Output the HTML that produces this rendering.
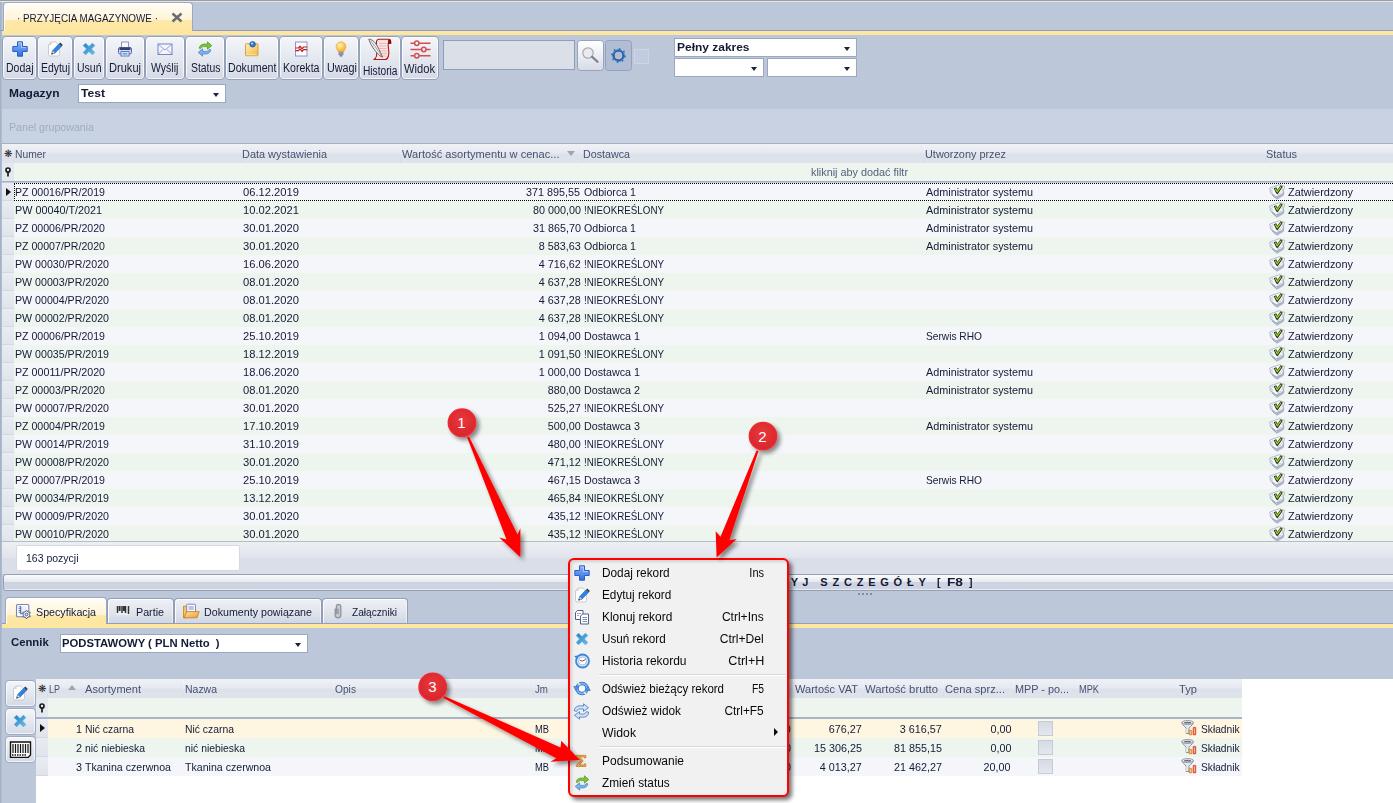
<!DOCTYPE html>
<html lang="pl"><head><meta charset="utf-8"><title>Przyjęcia magazynowe</title>
<style>
html,body{margin:0;padding:0}
body{width:1393px;height:803px;overflow:hidden;position:relative;background:#bcc7d9;font:11px 'Liberation Sans', sans-serif;color:#131a36}
.a{position:absolute;white-space:nowrap}
.t{position:absolute;white-space:nowrap;line-height:14px;height:14px}
.tr{position:absolute;white-space:nowrap;line-height:14px;height:14px;text-align:right}
.sx{display:inline-block;transform-origin:0 50%}
.btn{position:absolute;box-sizing:border-box;border:1px solid #95a2ba;border-radius:4px;background:linear-gradient(#f4f6f9 0%,#e6e9f0 45%,#d4dae5 100%);box-shadow:inset 0 0 0 1px rgba(255,255,255,.7)}
.btn .l{position:absolute;left:0;right:0;text-align:center;font-size:12.5px;line-height:14px;white-space:nowrap}
.cb{position:absolute;box-sizing:border-box;background:#fff;border:1px solid #9aa7bf}
.cb i{position:absolute;right:6px;top:50%;margin-top:-1px;width:0;height:0;border-left:3.5px solid transparent;border-right:3.5px solid transparent;border-top:4px solid #1b2440}
.cb b{position:absolute;left:3px;top:50%;margin-top:-8px;line-height:14px;font-size:11px;white-space:nowrap}
.hd{position:absolute;box-sizing:border-box;background:linear-gradient(#eff1f6 0%,#e6e9f0 48%,#dde1ea 52%,#dfe3eb 100%);color:#465170;line-height:18px;white-space:nowrap;overflow:hidden}
.row{position:absolute;left:0;height:18px}
.mi{position:absolute;left:0;right:0;height:22px;font-size:12px;line-height:22px;color:#1a1a1a;white-space:nowrap}
</style></head><body>

<div class="a" style="left:0;top:0;width:1393px;height:1px;background:#9c9c9c"></div>
<div class="a" style="left:0;top:1px;width:1393px;height:1px;background:#e4e6ea"></div>
<div class="a" style="left:0;top:2px;width:2px;height:801px;background:linear-gradient(90deg,#a3afc6,#b2bdd1)"></div>
<div class="a" style="left:0;top:30px;width:1393px;height:1px;background:#8f9fbd"></div>
<div class="a" style="left:2px;top:31px;width:1391px;height:4px;background:#fde6a0"></div>
<div class="a" style="left:3px;top:2px;width:190px;height:29px;box-sizing:border-box;border:1px solid #9ba8c1;border-bottom:none;border-radius:4px 4px 0 0;background:linear-gradient(#fffdf6 0%,#fff4d8 59%,#fde8a8 63%,#fde6a0 100%);box-shadow:inset 1px 1px 0 rgba(255,255,255,.8)"></div>
<div class="t" style="left:16.8px;top:11px;"><span class="sx" style="transform:scaleX(0.8976);transform-origin:0 50%">· PRZYJĘCIA MAGAZYNOWE ·</span></div>
<svg class="a" style="left:171px;top:12px" width="12" height="11" viewBox="0 0 12 11"><path d="M1.500 1.500l9 8M10.500 1.500l-9 8" stroke="#666a72" stroke-width="2.400"/></svg>
<div class="btn" style="left:2px;top:36px;width:35px;height:44px"></div>
<div class="t" style="left:6.0px;top:61px;font-size:12.5px;"><span class="sx" style="transform:scaleX(0.8417);transform-origin:0 50%">Dodaj</span></div>
<svg style="position:absolute;left:12px;top:41px" width="16" height="16" viewBox="0 0 16 16"><defs><linearGradient id="gp1241" x1="0" y1="0" x2="0" y2="1"><stop offset="0" stop-color="#8db4f5"/><stop offset="1" stop-color="#2f6fe0"/></linearGradient></defs><path d="M5.5 0.8h5v4.7h4.7v5h-4.7v4.7h-5v-4.7h-4.7v-5h4.7z" fill="url(#gp1241)" stroke="#2a5fc8" stroke-width="1" stroke-linejoin="round"/><path d="M6.5 2h3v4.6h4.5" fill="none" stroke="#b9d2fb" stroke-width="1" opacity=".8"/></svg>
<div class="btn" style="left:37px;top:36px;width:36px;height:44px"></div>
<div class="t" style="left:40.8px;top:61px;font-size:12.5px;"><span class="sx" style="transform:scaleX(0.8345);transform-origin:0 50%">Edytuj</span></div>
<svg style="position:absolute;left:47px;top:41px" width="16" height="16" viewBox="0 0 16 16"><path d="M4.200 1h4.500l3.800 3.800v8.700a1.500 1.500 0 0 1-1.500 1.500h-8a1.500 1.500 0 0 1-1.500-1.500v-9.500z" fill="#fefefe" stroke="#c2c6cf" stroke-width=".900" stroke-linejoin="round"/><path d="M4.200 1v2.500h-2.500z" fill="#e3e5ea" stroke="#c2c6cf" stroke-width=".600"/><path d="M4.600 13.200l1.100-3.600 6.400-6.800 2.500 2.400-6.400 6.800z" fill="#2b84ea" stroke="#1c62c0" stroke-width=".600"/><path d="M12.100 2.800l1.200-1.300 2.500 2.400-1.200 1.300z" fill="#3a3a3a"/><path d="M4.600 13.200l1.100-3.600 2.500 2.400z" fill="#dcdcdc" stroke="#7a7a7a" stroke-width=".500"/><path d="M4.600 13.200l.500-1.500 1 1z" fill="#2a2a2a"/></svg>
<div class="btn" style="left:73px;top:36px;width:32px;height:44px"></div>
<div class="t" style="left:76.9px;top:61px;font-size:12.5px;"><span class="sx" style="transform:scaleX(0.8394);transform-origin:0 50%">Usuń</span></div>
<svg style="position:absolute;left:81px;top:41px" width="16" height="16" viewBox="0 0 16 16"><defs><linearGradient id="gd8141" x1="0" y1="0" x2="1" y2="1"><stop offset="0" stop-color="#1f7fc4"/><stop offset="1" stop-color="#6fc0ee"/></linearGradient></defs><path d="M2.2 4.6l2.4-2.4 3.4 3.4 3.4-3.4 2.4 2.4-3.4 3.4 3.4 3.4-2.4 2.4-3.4-3.4-3.4 3.4-2.4-2.4 3.4-3.4z" fill="url(#gd8141)" stroke="#4aa3dc" stroke-width=".6" stroke-linejoin="round"/></svg>
<div class="btn" style="left:105px;top:36px;width:40px;height:44px"></div>
<div class="t" style="left:109.2px;top:61px;font-size:12.5px;"><span class="sx" style="transform:scaleX(0.8858);transform-origin:0 50%">Drukuj</span></div>
<svg style="position:absolute;left:117px;top:41px" width="16" height="16" viewBox="0 0 16 16"><rect x="4.500" y="1" width="7" height="6" fill="#f8f9fd" stroke="#8a96c8" stroke-width="1"/><rect x="1.500" y="6.500" width="13" height="6.500" rx="1.500" fill="#d3daf2" stroke="#5a69ad" stroke-width="1"/><rect x="2.500" y="6.500" width="11" height="2.500" fill="#33406e"/><rect x="4" y="10.500" width="8" height="4.500" fill="#eef4fd" stroke="#6878b8" stroke-width="1"/><rect x="5.500" y="11.800" width="5" height="1.800" fill="#58a6ea"/></svg>
<div class="btn" style="left:145px;top:36px;width:40px;height:44px"></div>
<div class="t" style="left:151.2px;top:61px;font-size:12.5px;"><span class="sx" style="transform:scaleX(0.8392);transform-origin:0 50%">Wyślij</span></div>
<svg style="position:absolute;left:157px;top:41px" width="16" height="16" viewBox="0 0 16 16"><rect x="1" y="3" width="14" height="10.5" fill="#f4f6fd" stroke="#7484c4" stroke-width="1"/><path d="M1.3 3.4l6.7 5.6 6.7-5.6M1.3 13.2l5-5M14.7 13.2l-5-5" fill="none" stroke="#8a98d0" stroke-width=".9"/></svg>
<div class="btn" style="left:185px;top:36px;width:40px;height:44px"></div>
<div class="t" style="left:190.7px;top:61px;font-size:12.5px;"><span class="sx" style="transform:scaleX(0.8325);transform-origin:0 50%">Status</span></div>
<svg style="position:absolute;left:197px;top:41px" width="16" height="16" viewBox="0 0 16 16"><path d="M2.2 7.2c.4-3 3-4.4 6-4.2l2.2.2v-2.4l4.4 3.8-4.4 3.6v-2.4l-2.4-.2c-2-.1-3.6.4-4.4 2z" fill="#7cc33a" stroke="#4d9a1c" stroke-width=".7" stroke-linejoin="round"/><path d="M13.8 8.8c-.4 3-3 4.4-6 4.2l-2.2-.2v2.4l-4.4-3.8 4.4-3.6v2.4l2.4.2c2 .1 3.600-.4 4.400-2z" fill="#7db3ea" stroke="#3d7dc8" stroke-width=".7" stroke-linejoin="round"/></svg>
<div class="btn" style="left:225px;top:36px;width:54px;height:44px"></div>
<div class="t" style="left:227.7px;top:61px;font-size:12.5px;"><span class="sx" style="transform:scaleX(0.8511);transform-origin:0 50%">Dokument</span></div>
<svg style="position:absolute;left:244px;top:41px" width="16" height="16" viewBox="0 0 16 16"><defs><linearGradient id="gdc24441" x1="0" y1="0" x2="1" y2="1"><stop offset="0" stop-color="#fdf0c0"/><stop offset="1" stop-color="#f4b63c"/></linearGradient></defs><rect x="1.500" y="2.700" width="12.500" height="12" rx=".800" fill="url(#gdc24441)" stroke="#d9a041" stroke-width="1"/><path d="M2.500 13.700h10.500" stroke="#fbe3a0" stroke-width="1"/><circle cx="8.600" cy="3.300" r="2.800" fill="#2f76cc" stroke="#1f58a6" stroke-width=".700"/><circle cx="8" cy="2.500" r="1.100" fill="#bcd9f8"/></svg>
<div class="btn" style="left:279px;top:36px;width:44px;height:44px"></div>
<div class="t" style="left:282.7px;top:61px;font-size:12.5px;"><span class="sx" style="transform:scaleX(0.8470);transform-origin:0 50%">Korekta</span></div>
<svg style="position:absolute;left:293px;top:41px" width="16" height="16" viewBox="0 0 16 16"><rect x="2.500" y="1" width="11.500" height="14" fill="#fdfdff" stroke="#8a96cc" stroke-width="1"/><path d="M2.200 7h3.300l1.500-1.800 2 2.600 1.500-1.800h3.800M2.200 9.700h3.300l1.500-1.800 2 2.600 1.500-1.800h3.800" fill="none" stroke="#c61c1c" stroke-width="1.200" stroke-linejoin="round"/></svg>
<div class="btn" style="left:323px;top:36px;width:36px;height:44px"></div>
<div class="t" style="left:326.9px;top:61px;font-size:12.5px;"><span class="sx" style="transform:scaleX(0.8633);transform-origin:0 50%">Uwagi</span></div>
<svg style="position:absolute;left:333px;top:41px" width="16" height="16" viewBox="0 0 16 16"><defs><radialGradient id="gb33341" cx=".4" cy=".35" r=".7"><stop offset="0" stop-color="#fff3b0"/><stop offset="1" stop-color="#f5a623"/></radialGradient></defs><path d="M8 .8a5 5 0 0 1 5 5c0 2.200-1.800 3.200-2.200 5.200h-5.600c-.4-2-2.200-3-2.200-5.200a5 5 0 0 1 5-5z" fill="url(#gb33341)" stroke="#e8a030" stroke-width=".5"/><rect x="5.800" y="11.200" width="4.400" height="3" rx=".8" fill="#8e98b8" stroke="#6a7498" stroke-width=".5"/><path d="M6.800 15h2.400" stroke="#555f80" stroke-width="1"/></svg>
<div class="btn" style="left:359px;top:36px;width:42px;height:44px"></div>
<div class="t" style="left:362.7px;top:64px;font-size:12.5px;"><span class="sx" style="transform:scaleX(0.8142);transform-origin:0 50%">Historia</span></div>
<svg style="position:absolute;left:368px;top:37.5px" width="24" height="23" viewBox="0 0 24 23"><path d="M8.500 4c0-1.600.900-2.800 2.500-2.800h9c1.800 0 2.800 1.200 2.800 2.800v1.500h-2.600c-.400 4 1.600 8 .200 12.500-.500 2-1.500 3.500-3.300 3.500h-11.600c1.800-.500 2.600-1.600 3-3.500 1-4.500-.500-9 0-14z" fill="#fde4e4" stroke="#b01818" stroke-width="1.100"/><path d="M20 5.500v-2.500c0-1 .600-1.800 1.500-1.800s1.400.800 1.400 1.800v2.500z" fill="#8e0c0c"/><path d="M11 5.500h7.500M11 8h7.500M11.300 10.500h7.500M11.600 13h7.500M11.600 15.500h7.500M11.300 18h7" stroke="#eda6a6" stroke-width=".800"/><path d="M.800 1.200c4.500-.200 8.500 5.500 11.500 13l2.300 5-2.800-1.500c-2.500-2-9-9.500-11-16.500z" fill="#ececec" stroke="#5e5e5e" stroke-width=".900" stroke-linejoin="round"/><path d="M2 2.500c3 3 7.500 9 11.500 15.500" stroke="#8a8a8a" stroke-width=".700" fill="none"/></svg>
<div class="btn" style="left:401px;top:36px;width:38px;height:44px"></div>
<div class="t" style="left:404.2px;top:62px;font-size:12.5px;"><span class="sx" style="transform:scaleX(0.8925);transform-origin:0 50%">Widok</span></div>
<svg style="position:absolute;left:410px;top:40.4px" width="21" height="19" viewBox="0 0 21 19"><g fill="none" stroke="#cf4f52" stroke-width="1.500"><path d="M.5 3.200h4M9.200 3.200h11.300M.5 9.500h11M16.200 9.500h4.300M.5 15.800h4M9.200 15.800h11.300"/><circle cx="6.800" cy="3.200" r="2.200"/><circle cx="13.800" cy="9.500" r="2.200"/><circle cx="6.800" cy="15.800" r="2.200"/></g></svg>
<div class="a" style="left:443px;top:40px;width:132px;height:30px;box-sizing:border-box;border:1px solid #8f9db8;background:#dbdfe8"></div>
<div class="a" style="left:576.500px;top:39.500px;width:27.500px;height:31.500px;box-sizing:border-box;border:1px solid #97a4bc;border-radius:3.500px;background:linear-gradient(#ffffff 0%,#eef0f5 45%,#d6dbe6 100%)"></div>
<svg class="a" style="left:581px;top:46px" width="19" height="18" viewBox="0 0 19 18"><circle cx="7" cy="7" r="5.200" fill="#e9ebee" stroke="#a9acb2" stroke-width="1.300"/><path d="M11 10.800l5.500 5" stroke="#7b7e86" stroke-width="2.200" stroke-linecap="round"/></svg>
<div class="a" style="left:604.500px;top:39.500px;width:27.500px;height:31.500px;box-sizing:border-box;border:1px solid #94a2bc;border-radius:3.500px;background:#b1bdd4"></div>
<svg class="a" style="left:610px;top:47px" width="17" height="17" viewBox="0 0 17 17"><circle cx="8.500" cy="8.500" r="6.700" fill="none" stroke="#1a8fc8" stroke-width="1.700" stroke-dasharray="1.800 3.462"/><circle cx="8.500" cy="8.500" r="4.700" fill="none" stroke="#1748a0" stroke-width="1.500"/><circle cx="8.500" cy="8.500" r="6" fill="none" stroke="#1748a0" stroke-width=".500"/></svg>
<div class="a" style="left:634px;top:49px;width:15px;height:15px;box-sizing:border-box;border:1px solid #cdd5e3;background:#c2cce0"></div>
<div class="cb" style="left:674px;top:38px;width:183px;height:19px"><i></i></div>
<div class="t" style="left:676.6px;top:40px;font-weight:bold;"><span class="sx" style="transform:scaleX(1.0877);transform-origin:0 50%">Pełny zakres</span></div>
<div class="cb" style="left:674px;top:58px;width:90px;height:19px"><i></i></div>
<div class="cb" style="left:767px;top:58px;width:90px;height:19px"><i></i></div>
<div class="t" style="left:9.3px;top:86px;font-weight:bold;"><span class="sx" style="transform:scaleX(1.0868);transform-origin:0 50%">Magazyn</span></div>
<div class="cb" style="left:78px;top:84px;width:148px;height:19px"><i></i></div>
<div class="t" style="left:81.0px;top:86px;font-weight:bold;"><span class="sx" style="transform:scaleX(1.1003);transform-origin:0 50%">Test</span></div>
<div class="a" style="left:2px;top:109px;width:1391px;height:35px;background:#c8d2e3"></div>
<div class="a" style="left:2px;top:143px;width:1391px;height:1px;background:#a6b0c6"></div>
<div class="t" style="left:8.8px;top:120px;color:#9fabc2;"><span class="sx" style="transform:scaleX(0.9651);transform-origin:0 50%">Panel grupowania</span></div>
<div class="hd" style="left:2px;top:144px;width:1391px;height:19px"></div>
<div class="t" style="left:4px;top:147px;font-size:10px;color:#222">❋</div>
<div class="t" style="left:14.8px;top:147px;color:#465170;"><span class="sx" style="transform:scaleX(0.9389);transform-origin:0 50%">Numer</span></div>
<div class="a" style="left:13.0px;top:145px;width:1px;height:17px;background:linear-gradient(#f6f7fa,#d3d8e3)"></div>
<div class="t" style="left:242.3px;top:147px;color:#465170;"><span class="sx" style="transform:scaleX(0.9931);transform-origin:0 50%">Data wystawienia</span></div>
<div class="a" style="left:240.5px;top:145px;width:1px;height:17px;background:linear-gradient(#f6f7fa,#d3d8e3)"></div>
<div class="t" style="left:401.8px;top:147px;color:#465170;"><span class="sx" style="transform:scaleX(1.0090);transform-origin:0 50%">Wartość asortymentu w cenac...</span></div>
<div class="a" style="left:400.0px;top:145px;width:1px;height:17px;background:linear-gradient(#f6f7fa,#d3d8e3)"></div>
<div class="t" style="left:583.3px;top:147px;color:#465170;"><span class="sx" style="transform:scaleX(0.9731);transform-origin:0 50%">Dostawca</span></div>
<div class="a" style="left:581.5px;top:145px;width:1px;height:17px;background:linear-gradient(#f6f7fa,#d3d8e3)"></div>
<div class="t" style="left:925.3px;top:147px;color:#465170;"><span class="sx" style="transform:scaleX(0.9887);transform-origin:0 50%">Utworzony przez</span></div>
<div class="a" style="left:923.5px;top:145px;width:1px;height:17px;background:linear-gradient(#f6f7fa,#d3d8e3)"></div>
<div class="t" style="left:1266.3px;top:147px;color:#465170;"><span class="sx" style="transform:scaleX(0.9940);transform-origin:0 50%">Status</span></div>
<div class="a" style="left:1264.5px;top:145px;width:1px;height:17px;background:linear-gradient(#f6f7fa,#d3d8e3)"></div>
<div class="a" style="left:567px;top:151px;width:0;height:0;border-left:4.500px solid transparent;border-right:4.500px solid transparent;border-top:5px solid #9ea6b6"></div>
<div class="a" style="left:2px;top:163px;width:1391px;height:19px;background:#edf5ee"></div>
<div class="a" style="left:2px;top:163px;width:11.500px;height:19px;background:#e4e8ef"></div>
<svg class="a" style="left:4px;top:167px" width="8" height="11" viewBox="0 0 8 11"><circle cx="4" cy="3" r="2" fill="#fff" stroke="#1a1a1a" stroke-width="1.700"/><path d="M4 5v4.500" stroke="#1a1a1a" stroke-width="1.700"/></svg>
<div class="t" style="left:811.3px;top:165px;color:#55607c;"><span class="sx" style="transform:scaleX(0.9854);transform-origin:0 50%">kliknij aby dodać filtr</span></div>
<div class="a" style="left:2px;top:181px;width:1391px;height:1px;background:#a6b0c6"></div><div class="a" style="left:2px;top:182px;width:1391px;height:1px;background:#c3cad9"></div>
<div class="a" style="left:13.500px;top:183px;width:1379.500px;height:18px;background:#f5f6fa"></div>
<div class="a" style="left:2px;top:183px;width:11.500px;height:18px;background:linear-gradient(#e9ecf2,#dfe3eb);box-shadow:inset 0 -1px 0 #d3d8e2"></div>
<div class="t" style="left:14.8px;top:185px;"><span class="sx" style="transform:scaleX(0.9618);transform-origin:0 50%">PZ 00016/PR/2019</span></div>
<div class="t" style="left:242.8px;top:185px;"><span class="sx" style="transform:scaleX(1.0170);transform-origin:0 50%">06.12.2019</span></div>
<div class="t" style="right:812.5px;top:185px;"><span class="sx" style="transform:scaleX(0.9807);transform-origin:100% 50%">371 895,55</span></div>
<div class="t" style="left:584.3px;top:185px;"><span class="sx" style="transform:scaleX(0.9663);transform-origin:0 50%">Odbiorca 1</span></div>
<div class="t" style="left:926.3px;top:185px;"><span class="sx" style="transform:scaleX(0.9833);transform-origin:0 50%">Administrator systemu</span></div>
<svg class="a" style="left:1268.5px;top:184.2px" width="17" height="16" viewBox="0 0 17 16"><path d="M3.500 11.500l4.500 3.800 6.500-4-.300-1.300-6.500 3.300-4-3z" fill="#c3c9d6" stroke="#8a93a8" stroke-width=".600"/><path d="M2 9.500l5.500 4.500 7.500-4.300-.600-1.700-7 3.500-5-4z" fill="#d5dae4" stroke="#8f98ad" stroke-width=".600"/><path d="M1 7.800l6 4.700 8-4.200-1-2z" fill="#e6e9f0" stroke="#98a1b6" stroke-width=".600"/><path d="M.800 4l9.700-3.300 5.200 1.600-2.200 8-6.500 2.500-5.600-4.500z" fill="#f7f8fb" stroke="#9aa2b6" stroke-width=".700"/><path d="M2.200 5.500l1.300 3M3.400 4.300l.700 1.400M14 4l-1.200 3.500M12.500 9l-4.500 2" stroke="#a9bbdc" stroke-width=".800"/><path d="M6 3.800l2.200 4.700 4.500-6.600" fill="none" stroke="#222c16" stroke-width="2.700" stroke-linejoin="round"/><path d="M6.300 4.500l2 3.400 3.800-5.300" fill="none" stroke="#a2dc22" stroke-width="1.200" stroke-linejoin="round"/></svg>
<div class="t" style="left:1288.0px;top:185px;"><span class="sx" style="transform:scaleX(0.9936);transform-origin:0 50%">Zatwierdzony</span></div>
<div class="a" style="left:13.500px;top:201px;width:1379.500px;height:18px;background:#edf5ee"></div>
<div class="a" style="left:2px;top:201px;width:11.500px;height:18px;background:linear-gradient(#e9ecf2,#dfe3eb);box-shadow:inset 0 -1px 0 #d3d8e2"></div>
<div class="t" style="left:14.8px;top:203px;"><span class="sx" style="transform:scaleX(0.9811);transform-origin:0 50%">PW 00040/T/2021</span></div>
<div class="t" style="left:242.8px;top:203px;"><span class="sx" style="transform:scaleX(1.0170);transform-origin:0 50%">10.02.2021</span></div>
<div class="t" style="right:812.5px;top:203px;"><span class="sx" style="transform:scaleX(0.9808);transform-origin:100% 50%">80 000,00</span></div>
<div class="t" style="left:584.3px;top:203px;"><span class="sx" style="transform:scaleX(0.8903);transform-origin:0 50%">!NIEOKREŚLONY</span></div>
<div class="t" style="left:926.3px;top:203px;"><span class="sx" style="transform:scaleX(0.9833);transform-origin:0 50%">Administrator systemu</span></div>
<svg class="a" style="left:1268.5px;top:202.2px" width="17" height="16" viewBox="0 0 17 16"><path d="M3.500 11.500l4.500 3.800 6.500-4-.300-1.300-6.500 3.300-4-3z" fill="#c3c9d6" stroke="#8a93a8" stroke-width=".600"/><path d="M2 9.500l5.500 4.500 7.500-4.300-.600-1.700-7 3.500-5-4z" fill="#d5dae4" stroke="#8f98ad" stroke-width=".600"/><path d="M1 7.800l6 4.700 8-4.200-1-2z" fill="#e6e9f0" stroke="#98a1b6" stroke-width=".600"/><path d="M.800 4l9.700-3.300 5.200 1.600-2.200 8-6.500 2.500-5.600-4.500z" fill="#f7f8fb" stroke="#9aa2b6" stroke-width=".700"/><path d="M2.200 5.500l1.300 3M3.400 4.300l.700 1.400M14 4l-1.200 3.500M12.500 9l-4.500 2" stroke="#a9bbdc" stroke-width=".800"/><path d="M6 3.800l2.200 4.700 4.500-6.600" fill="none" stroke="#222c16" stroke-width="2.700" stroke-linejoin="round"/><path d="M6.300 4.500l2 3.400 3.800-5.300" fill="none" stroke="#a2dc22" stroke-width="1.200" stroke-linejoin="round"/></svg>
<div class="t" style="left:1288.0px;top:203px;"><span class="sx" style="transform:scaleX(0.9936);transform-origin:0 50%">Zatwierdzony</span></div>
<div class="a" style="left:13.500px;top:219px;width:1379.500px;height:18px;background:#f5f6fa"></div>
<div class="a" style="left:2px;top:219px;width:11.500px;height:18px;background:linear-gradient(#e9ecf2,#dfe3eb);box-shadow:inset 0 -1px 0 #d3d8e2"></div>
<div class="t" style="left:14.8px;top:221px;"><span class="sx" style="transform:scaleX(0.9618);transform-origin:0 50%">PZ 00006/PR/2020</span></div>
<div class="t" style="left:242.8px;top:221px;"><span class="sx" style="transform:scaleX(1.0170);transform-origin:0 50%">30.01.2020</span></div>
<div class="t" style="right:812.5px;top:221px;"><span class="sx" style="transform:scaleX(0.9808);transform-origin:100% 50%">31 865,70</span></div>
<div class="t" style="left:584.3px;top:221px;"><span class="sx" style="transform:scaleX(0.9663);transform-origin:0 50%">Odbiorca 1</span></div>
<div class="t" style="left:926.3px;top:221px;"><span class="sx" style="transform:scaleX(0.9833);transform-origin:0 50%">Administrator systemu</span></div>
<svg class="a" style="left:1268.5px;top:220.2px" width="17" height="16" viewBox="0 0 17 16"><path d="M3.500 11.500l4.500 3.800 6.500-4-.300-1.300-6.500 3.300-4-3z" fill="#c3c9d6" stroke="#8a93a8" stroke-width=".600"/><path d="M2 9.500l5.500 4.500 7.500-4.300-.600-1.700-7 3.500-5-4z" fill="#d5dae4" stroke="#8f98ad" stroke-width=".600"/><path d="M1 7.800l6 4.700 8-4.200-1-2z" fill="#e6e9f0" stroke="#98a1b6" stroke-width=".600"/><path d="M.800 4l9.700-3.300 5.200 1.600-2.200 8-6.500 2.500-5.600-4.500z" fill="#f7f8fb" stroke="#9aa2b6" stroke-width=".700"/><path d="M2.200 5.500l1.300 3M3.400 4.300l.700 1.400M14 4l-1.200 3.500M12.500 9l-4.500 2" stroke="#a9bbdc" stroke-width=".800"/><path d="M6 3.800l2.200 4.700 4.500-6.600" fill="none" stroke="#222c16" stroke-width="2.700" stroke-linejoin="round"/><path d="M6.300 4.500l2 3.400 3.800-5.300" fill="none" stroke="#a2dc22" stroke-width="1.200" stroke-linejoin="round"/></svg>
<div class="t" style="left:1288.0px;top:221px;"><span class="sx" style="transform:scaleX(0.9936);transform-origin:0 50%">Zatwierdzony</span></div>
<div class="a" style="left:13.500px;top:237px;width:1379.500px;height:18px;background:#edf5ee"></div>
<div class="a" style="left:2px;top:237px;width:11.500px;height:18px;background:linear-gradient(#e9ecf2,#dfe3eb);box-shadow:inset 0 -1px 0 #d3d8e2"></div>
<div class="t" style="left:14.8px;top:239px;"><span class="sx" style="transform:scaleX(0.9618);transform-origin:0 50%">PZ 00007/PR/2020</span></div>
<div class="t" style="left:242.8px;top:239px;"><span class="sx" style="transform:scaleX(1.0170);transform-origin:0 50%">30.01.2020</span></div>
<div class="t" style="right:812.5px;top:239px;"><span class="sx" style="transform:scaleX(0.9807);transform-origin:100% 50%">8 583,63</span></div>
<div class="t" style="left:584.3px;top:239px;"><span class="sx" style="transform:scaleX(0.9663);transform-origin:0 50%">Odbiorca 1</span></div>
<div class="t" style="left:926.3px;top:239px;"><span class="sx" style="transform:scaleX(0.9833);transform-origin:0 50%">Administrator systemu</span></div>
<svg class="a" style="left:1268.5px;top:238.2px" width="17" height="16" viewBox="0 0 17 16"><path d="M3.500 11.500l4.500 3.800 6.500-4-.300-1.300-6.500 3.300-4-3z" fill="#c3c9d6" stroke="#8a93a8" stroke-width=".600"/><path d="M2 9.500l5.500 4.500 7.500-4.300-.600-1.700-7 3.500-5-4z" fill="#d5dae4" stroke="#8f98ad" stroke-width=".600"/><path d="M1 7.800l6 4.700 8-4.200-1-2z" fill="#e6e9f0" stroke="#98a1b6" stroke-width=".600"/><path d="M.800 4l9.700-3.300 5.200 1.600-2.200 8-6.500 2.500-5.600-4.500z" fill="#f7f8fb" stroke="#9aa2b6" stroke-width=".700"/><path d="M2.200 5.500l1.300 3M3.400 4.300l.700 1.400M14 4l-1.200 3.500M12.500 9l-4.500 2" stroke="#a9bbdc" stroke-width=".800"/><path d="M6 3.800l2.200 4.700 4.500-6.600" fill="none" stroke="#222c16" stroke-width="2.700" stroke-linejoin="round"/><path d="M6.300 4.500l2 3.400 3.800-5.300" fill="none" stroke="#a2dc22" stroke-width="1.200" stroke-linejoin="round"/></svg>
<div class="t" style="left:1288.0px;top:239px;"><span class="sx" style="transform:scaleX(0.9936);transform-origin:0 50%">Zatwierdzony</span></div>
<div class="a" style="left:13.500px;top:255px;width:1379.500px;height:18px;background:#f5f6fa"></div>
<div class="a" style="left:2px;top:255px;width:11.500px;height:18px;background:linear-gradient(#e9ecf2,#dfe3eb);box-shadow:inset 0 -1px 0 #d3d8e2"></div>
<div class="t" style="left:14.8px;top:257px;"><span class="sx" style="transform:scaleX(0.9667);transform-origin:0 50%">PW 00030/PR/2020</span></div>
<div class="t" style="left:242.8px;top:257px;"><span class="sx" style="transform:scaleX(1.0170);transform-origin:0 50%">16.06.2020</span></div>
<div class="t" style="right:812.5px;top:257px;"><span class="sx" style="transform:scaleX(0.9807);transform-origin:100% 50%">4 716,62</span></div>
<div class="t" style="left:584.3px;top:257px;"><span class="sx" style="transform:scaleX(0.8903);transform-origin:0 50%">!NIEOKREŚLONY</span></div>
<svg class="a" style="left:1268.5px;top:256.2px" width="17" height="16" viewBox="0 0 17 16"><path d="M3.500 11.500l4.500 3.800 6.500-4-.300-1.300-6.500 3.300-4-3z" fill="#c3c9d6" stroke="#8a93a8" stroke-width=".600"/><path d="M2 9.500l5.500 4.500 7.500-4.300-.600-1.700-7 3.500-5-4z" fill="#d5dae4" stroke="#8f98ad" stroke-width=".600"/><path d="M1 7.800l6 4.700 8-4.200-1-2z" fill="#e6e9f0" stroke="#98a1b6" stroke-width=".600"/><path d="M.800 4l9.700-3.300 5.200 1.600-2.200 8-6.500 2.500-5.600-4.500z" fill="#f7f8fb" stroke="#9aa2b6" stroke-width=".700"/><path d="M2.200 5.500l1.300 3M3.400 4.300l.700 1.400M14 4l-1.200 3.500M12.500 9l-4.500 2" stroke="#a9bbdc" stroke-width=".800"/><path d="M6 3.800l2.200 4.700 4.500-6.600" fill="none" stroke="#222c16" stroke-width="2.700" stroke-linejoin="round"/><path d="M6.300 4.500l2 3.400 3.800-5.300" fill="none" stroke="#a2dc22" stroke-width="1.200" stroke-linejoin="round"/></svg>
<div class="t" style="left:1288.0px;top:257px;"><span class="sx" style="transform:scaleX(0.9936);transform-origin:0 50%">Zatwierdzony</span></div>
<div class="a" style="left:13.500px;top:273px;width:1379.500px;height:18px;background:#edf5ee"></div>
<div class="a" style="left:2px;top:273px;width:11.500px;height:18px;background:linear-gradient(#e9ecf2,#dfe3eb);box-shadow:inset 0 -1px 0 #d3d8e2"></div>
<div class="t" style="left:14.8px;top:275px;"><span class="sx" style="transform:scaleX(0.9667);transform-origin:0 50%">PW 00003/PR/2020</span></div>
<div class="t" style="left:242.8px;top:275px;"><span class="sx" style="transform:scaleX(1.0170);transform-origin:0 50%">08.01.2020</span></div>
<div class="t" style="right:812.5px;top:275px;"><span class="sx" style="transform:scaleX(0.9807);transform-origin:100% 50%">4 637,28</span></div>
<div class="t" style="left:584.3px;top:275px;"><span class="sx" style="transform:scaleX(0.8903);transform-origin:0 50%">!NIEOKREŚLONY</span></div>
<svg class="a" style="left:1268.5px;top:274.2px" width="17" height="16" viewBox="0 0 17 16"><path d="M3.500 11.500l4.500 3.800 6.500-4-.300-1.300-6.500 3.300-4-3z" fill="#c3c9d6" stroke="#8a93a8" stroke-width=".600"/><path d="M2 9.500l5.500 4.500 7.500-4.300-.600-1.700-7 3.500-5-4z" fill="#d5dae4" stroke="#8f98ad" stroke-width=".600"/><path d="M1 7.800l6 4.700 8-4.200-1-2z" fill="#e6e9f0" stroke="#98a1b6" stroke-width=".600"/><path d="M.800 4l9.700-3.300 5.200 1.600-2.200 8-6.500 2.500-5.600-4.500z" fill="#f7f8fb" stroke="#9aa2b6" stroke-width=".700"/><path d="M2.200 5.500l1.300 3M3.400 4.300l.700 1.400M14 4l-1.200 3.500M12.500 9l-4.500 2" stroke="#a9bbdc" stroke-width=".800"/><path d="M6 3.800l2.200 4.700 4.500-6.600" fill="none" stroke="#222c16" stroke-width="2.700" stroke-linejoin="round"/><path d="M6.300 4.500l2 3.400 3.800-5.300" fill="none" stroke="#a2dc22" stroke-width="1.200" stroke-linejoin="round"/></svg>
<div class="t" style="left:1288.0px;top:275px;"><span class="sx" style="transform:scaleX(0.9936);transform-origin:0 50%">Zatwierdzony</span></div>
<div class="a" style="left:13.500px;top:291px;width:1379.500px;height:18px;background:#f5f6fa"></div>
<div class="a" style="left:2px;top:291px;width:11.500px;height:18px;background:linear-gradient(#e9ecf2,#dfe3eb);box-shadow:inset 0 -1px 0 #d3d8e2"></div>
<div class="t" style="left:14.8px;top:293px;"><span class="sx" style="transform:scaleX(0.9667);transform-origin:0 50%">PW 00004/PR/2020</span></div>
<div class="t" style="left:242.8px;top:293px;"><span class="sx" style="transform:scaleX(1.0170);transform-origin:0 50%">08.01.2020</span></div>
<div class="t" style="right:812.5px;top:293px;"><span class="sx" style="transform:scaleX(0.9807);transform-origin:100% 50%">4 637,28</span></div>
<div class="t" style="left:584.3px;top:293px;"><span class="sx" style="transform:scaleX(0.8903);transform-origin:0 50%">!NIEOKREŚLONY</span></div>
<svg class="a" style="left:1268.5px;top:292.2px" width="17" height="16" viewBox="0 0 17 16"><path d="M3.500 11.500l4.500 3.800 6.500-4-.300-1.300-6.500 3.300-4-3z" fill="#c3c9d6" stroke="#8a93a8" stroke-width=".600"/><path d="M2 9.500l5.500 4.500 7.500-4.300-.600-1.700-7 3.500-5-4z" fill="#d5dae4" stroke="#8f98ad" stroke-width=".600"/><path d="M1 7.800l6 4.700 8-4.200-1-2z" fill="#e6e9f0" stroke="#98a1b6" stroke-width=".600"/><path d="M.800 4l9.700-3.300 5.200 1.600-2.200 8-6.500 2.500-5.600-4.500z" fill="#f7f8fb" stroke="#9aa2b6" stroke-width=".700"/><path d="M2.200 5.500l1.300 3M3.400 4.300l.700 1.400M14 4l-1.200 3.500M12.500 9l-4.500 2" stroke="#a9bbdc" stroke-width=".800"/><path d="M6 3.800l2.200 4.700 4.500-6.600" fill="none" stroke="#222c16" stroke-width="2.700" stroke-linejoin="round"/><path d="M6.300 4.500l2 3.400 3.800-5.300" fill="none" stroke="#a2dc22" stroke-width="1.200" stroke-linejoin="round"/></svg>
<div class="t" style="left:1288.0px;top:293px;"><span class="sx" style="transform:scaleX(0.9936);transform-origin:0 50%">Zatwierdzony</span></div>
<div class="a" style="left:13.500px;top:309px;width:1379.500px;height:18px;background:#edf5ee"></div>
<div class="a" style="left:2px;top:309px;width:11.500px;height:18px;background:linear-gradient(#e9ecf2,#dfe3eb);box-shadow:inset 0 -1px 0 #d3d8e2"></div>
<div class="t" style="left:14.8px;top:311px;"><span class="sx" style="transform:scaleX(0.9667);transform-origin:0 50%">PW 00002/PR/2020</span></div>
<div class="t" style="left:242.8px;top:311px;"><span class="sx" style="transform:scaleX(1.0170);transform-origin:0 50%">08.01.2020</span></div>
<div class="t" style="right:812.5px;top:311px;"><span class="sx" style="transform:scaleX(0.9807);transform-origin:100% 50%">4 637,28</span></div>
<div class="t" style="left:584.3px;top:311px;"><span class="sx" style="transform:scaleX(0.8903);transform-origin:0 50%">!NIEOKREŚLONY</span></div>
<svg class="a" style="left:1268.5px;top:310.2px" width="17" height="16" viewBox="0 0 17 16"><path d="M3.500 11.500l4.500 3.800 6.500-4-.300-1.300-6.500 3.300-4-3z" fill="#c3c9d6" stroke="#8a93a8" stroke-width=".600"/><path d="M2 9.500l5.500 4.500 7.500-4.300-.600-1.700-7 3.500-5-4z" fill="#d5dae4" stroke="#8f98ad" stroke-width=".600"/><path d="M1 7.800l6 4.700 8-4.200-1-2z" fill="#e6e9f0" stroke="#98a1b6" stroke-width=".600"/><path d="M.800 4l9.700-3.300 5.200 1.600-2.200 8-6.500 2.500-5.600-4.500z" fill="#f7f8fb" stroke="#9aa2b6" stroke-width=".700"/><path d="M2.200 5.500l1.300 3M3.400 4.300l.700 1.400M14 4l-1.200 3.500M12.500 9l-4.500 2" stroke="#a9bbdc" stroke-width=".800"/><path d="M6 3.800l2.200 4.700 4.500-6.600" fill="none" stroke="#222c16" stroke-width="2.700" stroke-linejoin="round"/><path d="M6.300 4.500l2 3.400 3.800-5.300" fill="none" stroke="#a2dc22" stroke-width="1.200" stroke-linejoin="round"/></svg>
<div class="t" style="left:1288.0px;top:311px;"><span class="sx" style="transform:scaleX(0.9936);transform-origin:0 50%">Zatwierdzony</span></div>
<div class="a" style="left:13.500px;top:327px;width:1379.500px;height:18px;background:#f5f6fa"></div>
<div class="a" style="left:2px;top:327px;width:11.500px;height:18px;background:linear-gradient(#e9ecf2,#dfe3eb);box-shadow:inset 0 -1px 0 #d3d8e2"></div>
<div class="t" style="left:14.8px;top:329px;"><span class="sx" style="transform:scaleX(0.9618);transform-origin:0 50%">PZ 00006/PR/2019</span></div>
<div class="t" style="left:242.8px;top:329px;"><span class="sx" style="transform:scaleX(1.0170);transform-origin:0 50%">25.10.2019</span></div>
<div class="t" style="right:812.5px;top:329px;"><span class="sx" style="transform:scaleX(0.9807);transform-origin:100% 50%">1 094,00</span></div>
<div class="t" style="left:584.3px;top:329px;"><span class="sx" style="transform:scaleX(0.9742);transform-origin:0 50%">Dostawca 1</span></div>
<div class="t" style="left:926.3px;top:329px;"><span class="sx" style="transform:scaleX(0.9254);transform-origin:0 50%">Serwis RHO</span></div>
<svg class="a" style="left:1268.5px;top:328.2px" width="17" height="16" viewBox="0 0 17 16"><path d="M3.500 11.500l4.500 3.800 6.500-4-.300-1.300-6.500 3.300-4-3z" fill="#c3c9d6" stroke="#8a93a8" stroke-width=".600"/><path d="M2 9.500l5.500 4.500 7.500-4.300-.600-1.700-7 3.500-5-4z" fill="#d5dae4" stroke="#8f98ad" stroke-width=".600"/><path d="M1 7.800l6 4.700 8-4.200-1-2z" fill="#e6e9f0" stroke="#98a1b6" stroke-width=".600"/><path d="M.800 4l9.700-3.300 5.200 1.600-2.200 8-6.500 2.500-5.600-4.500z" fill="#f7f8fb" stroke="#9aa2b6" stroke-width=".700"/><path d="M2.200 5.500l1.300 3M3.400 4.300l.700 1.400M14 4l-1.200 3.500M12.500 9l-4.500 2" stroke="#a9bbdc" stroke-width=".800"/><path d="M6 3.800l2.200 4.700 4.500-6.600" fill="none" stroke="#222c16" stroke-width="2.700" stroke-linejoin="round"/><path d="M6.300 4.500l2 3.400 3.800-5.300" fill="none" stroke="#a2dc22" stroke-width="1.200" stroke-linejoin="round"/></svg>
<div class="t" style="left:1288.0px;top:329px;"><span class="sx" style="transform:scaleX(0.9936);transform-origin:0 50%">Zatwierdzony</span></div>
<div class="a" style="left:13.500px;top:345px;width:1379.500px;height:18px;background:#edf5ee"></div>
<div class="a" style="left:2px;top:345px;width:11.500px;height:18px;background:linear-gradient(#e9ecf2,#dfe3eb);box-shadow:inset 0 -1px 0 #d3d8e2"></div>
<div class="t" style="left:14.8px;top:347px;"><span class="sx" style="transform:scaleX(0.9667);transform-origin:0 50%">PW 00035/PR/2019</span></div>
<div class="t" style="left:242.8px;top:347px;"><span class="sx" style="transform:scaleX(1.0170);transform-origin:0 50%">18.12.2019</span></div>
<div class="t" style="right:812.5px;top:347px;"><span class="sx" style="transform:scaleX(0.9807);transform-origin:100% 50%">1 091,50</span></div>
<div class="t" style="left:584.3px;top:347px;"><span class="sx" style="transform:scaleX(0.8903);transform-origin:0 50%">!NIEOKREŚLONY</span></div>
<svg class="a" style="left:1268.5px;top:346.2px" width="17" height="16" viewBox="0 0 17 16"><path d="M3.500 11.500l4.500 3.800 6.500-4-.300-1.300-6.500 3.300-4-3z" fill="#c3c9d6" stroke="#8a93a8" stroke-width=".600"/><path d="M2 9.500l5.500 4.500 7.500-4.300-.600-1.700-7 3.500-5-4z" fill="#d5dae4" stroke="#8f98ad" stroke-width=".600"/><path d="M1 7.800l6 4.700 8-4.200-1-2z" fill="#e6e9f0" stroke="#98a1b6" stroke-width=".600"/><path d="M.800 4l9.700-3.300 5.200 1.600-2.200 8-6.500 2.500-5.600-4.500z" fill="#f7f8fb" stroke="#9aa2b6" stroke-width=".700"/><path d="M2.200 5.500l1.300 3M3.400 4.300l.700 1.400M14 4l-1.200 3.500M12.500 9l-4.500 2" stroke="#a9bbdc" stroke-width=".800"/><path d="M6 3.800l2.200 4.700 4.500-6.600" fill="none" stroke="#222c16" stroke-width="2.700" stroke-linejoin="round"/><path d="M6.300 4.500l2 3.400 3.800-5.300" fill="none" stroke="#a2dc22" stroke-width="1.200" stroke-linejoin="round"/></svg>
<div class="t" style="left:1288.0px;top:347px;"><span class="sx" style="transform:scaleX(0.9936);transform-origin:0 50%">Zatwierdzony</span></div>
<div class="a" style="left:13.500px;top:363px;width:1379.500px;height:18px;background:#f5f6fa"></div>
<div class="a" style="left:2px;top:363px;width:11.500px;height:18px;background:linear-gradient(#e9ecf2,#dfe3eb);box-shadow:inset 0 -1px 0 #d3d8e2"></div>
<div class="t" style="left:14.8px;top:365px;"><span class="sx" style="transform:scaleX(0.9704);transform-origin:0 50%">PZ 00011/PR/2020</span></div>
<div class="t" style="left:242.8px;top:365px;"><span class="sx" style="transform:scaleX(1.0170);transform-origin:0 50%">18.06.2020</span></div>
<div class="t" style="right:812.5px;top:365px;"><span class="sx" style="transform:scaleX(0.9807);transform-origin:100% 50%">1 000,00</span></div>
<div class="t" style="left:584.3px;top:365px;"><span class="sx" style="transform:scaleX(0.9742);transform-origin:0 50%">Dostawca 1</span></div>
<div class="t" style="left:926.3px;top:365px;"><span class="sx" style="transform:scaleX(0.9833);transform-origin:0 50%">Administrator systemu</span></div>
<svg class="a" style="left:1268.5px;top:364.2px" width="17" height="16" viewBox="0 0 17 16"><path d="M3.500 11.500l4.500 3.800 6.500-4-.300-1.300-6.500 3.300-4-3z" fill="#c3c9d6" stroke="#8a93a8" stroke-width=".600"/><path d="M2 9.500l5.500 4.500 7.500-4.300-.600-1.700-7 3.500-5-4z" fill="#d5dae4" stroke="#8f98ad" stroke-width=".600"/><path d="M1 7.800l6 4.700 8-4.200-1-2z" fill="#e6e9f0" stroke="#98a1b6" stroke-width=".600"/><path d="M.800 4l9.700-3.300 5.200 1.600-2.200 8-6.500 2.500-5.600-4.500z" fill="#f7f8fb" stroke="#9aa2b6" stroke-width=".700"/><path d="M2.200 5.500l1.300 3M3.400 4.300l.700 1.400M14 4l-1.200 3.500M12.500 9l-4.500 2" stroke="#a9bbdc" stroke-width=".800"/><path d="M6 3.800l2.200 4.700 4.500-6.600" fill="none" stroke="#222c16" stroke-width="2.700" stroke-linejoin="round"/><path d="M6.300 4.500l2 3.400 3.800-5.300" fill="none" stroke="#a2dc22" stroke-width="1.200" stroke-linejoin="round"/></svg>
<div class="t" style="left:1288.0px;top:365px;"><span class="sx" style="transform:scaleX(0.9936);transform-origin:0 50%">Zatwierdzony</span></div>
<div class="a" style="left:13.500px;top:381px;width:1379.500px;height:18px;background:#edf5ee"></div>
<div class="a" style="left:2px;top:381px;width:11.500px;height:18px;background:linear-gradient(#e9ecf2,#dfe3eb);box-shadow:inset 0 -1px 0 #d3d8e2"></div>
<div class="t" style="left:14.8px;top:383px;"><span class="sx" style="transform:scaleX(0.9618);transform-origin:0 50%">PZ 00003/PR/2020</span></div>
<div class="t" style="left:242.8px;top:383px;"><span class="sx" style="transform:scaleX(1.0170);transform-origin:0 50%">08.01.2020</span></div>
<div class="t" style="right:812.5px;top:383px;"><span class="sx" style="transform:scaleX(0.9805);transform-origin:100% 50%">880,00</span></div>
<div class="t" style="left:584.3px;top:383px;"><span class="sx" style="transform:scaleX(0.9742);transform-origin:0 50%">Dostawca 2</span></div>
<div class="t" style="left:926.3px;top:383px;"><span class="sx" style="transform:scaleX(0.9833);transform-origin:0 50%">Administrator systemu</span></div>
<svg class="a" style="left:1268.5px;top:382.2px" width="17" height="16" viewBox="0 0 17 16"><path d="M3.500 11.500l4.500 3.800 6.500-4-.300-1.300-6.500 3.300-4-3z" fill="#c3c9d6" stroke="#8a93a8" stroke-width=".600"/><path d="M2 9.500l5.500 4.500 7.500-4.300-.600-1.700-7 3.500-5-4z" fill="#d5dae4" stroke="#8f98ad" stroke-width=".600"/><path d="M1 7.800l6 4.700 8-4.200-1-2z" fill="#e6e9f0" stroke="#98a1b6" stroke-width=".600"/><path d="M.800 4l9.700-3.300 5.200 1.600-2.200 8-6.500 2.500-5.600-4.500z" fill="#f7f8fb" stroke="#9aa2b6" stroke-width=".700"/><path d="M2.200 5.500l1.300 3M3.400 4.300l.700 1.400M14 4l-1.200 3.500M12.500 9l-4.500 2" stroke="#a9bbdc" stroke-width=".800"/><path d="M6 3.800l2.200 4.700 4.500-6.600" fill="none" stroke="#222c16" stroke-width="2.700" stroke-linejoin="round"/><path d="M6.300 4.500l2 3.400 3.800-5.300" fill="none" stroke="#a2dc22" stroke-width="1.200" stroke-linejoin="round"/></svg>
<div class="t" style="left:1288.0px;top:383px;"><span class="sx" style="transform:scaleX(0.9936);transform-origin:0 50%">Zatwierdzony</span></div>
<div class="a" style="left:13.500px;top:399px;width:1379.500px;height:18px;background:#f5f6fa"></div>
<div class="a" style="left:2px;top:399px;width:11.500px;height:18px;background:linear-gradient(#e9ecf2,#dfe3eb);box-shadow:inset 0 -1px 0 #d3d8e2"></div>
<div class="t" style="left:14.8px;top:401px;"><span class="sx" style="transform:scaleX(0.9667);transform-origin:0 50%">PW 00007/PR/2020</span></div>
<div class="t" style="left:242.8px;top:401px;"><span class="sx" style="transform:scaleX(1.0170);transform-origin:0 50%">30.01.2020</span></div>
<div class="t" style="right:812.5px;top:401px;"><span class="sx" style="transform:scaleX(0.9805);transform-origin:100% 50%">525,27</span></div>
<div class="t" style="left:584.3px;top:401px;"><span class="sx" style="transform:scaleX(0.8903);transform-origin:0 50%">!NIEOKREŚLONY</span></div>
<svg class="a" style="left:1268.5px;top:400.2px" width="17" height="16" viewBox="0 0 17 16"><path d="M3.500 11.500l4.500 3.800 6.500-4-.300-1.300-6.500 3.300-4-3z" fill="#c3c9d6" stroke="#8a93a8" stroke-width=".600"/><path d="M2 9.500l5.500 4.500 7.500-4.300-.600-1.700-7 3.500-5-4z" fill="#d5dae4" stroke="#8f98ad" stroke-width=".600"/><path d="M1 7.800l6 4.700 8-4.200-1-2z" fill="#e6e9f0" stroke="#98a1b6" stroke-width=".600"/><path d="M.800 4l9.700-3.300 5.200 1.600-2.200 8-6.500 2.500-5.600-4.500z" fill="#f7f8fb" stroke="#9aa2b6" stroke-width=".700"/><path d="M2.200 5.500l1.300 3M3.400 4.300l.700 1.400M14 4l-1.200 3.500M12.500 9l-4.500 2" stroke="#a9bbdc" stroke-width=".800"/><path d="M6 3.800l2.200 4.700 4.500-6.600" fill="none" stroke="#222c16" stroke-width="2.700" stroke-linejoin="round"/><path d="M6.300 4.500l2 3.400 3.800-5.300" fill="none" stroke="#a2dc22" stroke-width="1.200" stroke-linejoin="round"/></svg>
<div class="t" style="left:1288.0px;top:401px;"><span class="sx" style="transform:scaleX(0.9936);transform-origin:0 50%">Zatwierdzony</span></div>
<div class="a" style="left:13.500px;top:417px;width:1379.500px;height:18px;background:#edf5ee"></div>
<div class="a" style="left:2px;top:417px;width:11.500px;height:18px;background:linear-gradient(#e9ecf2,#dfe3eb);box-shadow:inset 0 -1px 0 #d3d8e2"></div>
<div class="t" style="left:14.8px;top:419px;"><span class="sx" style="transform:scaleX(0.9618);transform-origin:0 50%">PZ 00004/PR/2019</span></div>
<div class="t" style="left:242.8px;top:419px;"><span class="sx" style="transform:scaleX(1.0170);transform-origin:0 50%">17.10.2019</span></div>
<div class="t" style="right:812.5px;top:419px;"><span class="sx" style="transform:scaleX(0.9805);transform-origin:100% 50%">500,00</span></div>
<div class="t" style="left:584.3px;top:419px;"><span class="sx" style="transform:scaleX(0.9742);transform-origin:0 50%">Dostawca 3</span></div>
<div class="t" style="left:926.3px;top:419px;"><span class="sx" style="transform:scaleX(0.9833);transform-origin:0 50%">Administrator systemu</span></div>
<svg class="a" style="left:1268.5px;top:418.2px" width="17" height="16" viewBox="0 0 17 16"><path d="M3.500 11.500l4.500 3.800 6.500-4-.300-1.300-6.500 3.300-4-3z" fill="#c3c9d6" stroke="#8a93a8" stroke-width=".600"/><path d="M2 9.500l5.500 4.500 7.500-4.300-.600-1.700-7 3.500-5-4z" fill="#d5dae4" stroke="#8f98ad" stroke-width=".600"/><path d="M1 7.800l6 4.700 8-4.200-1-2z" fill="#e6e9f0" stroke="#98a1b6" stroke-width=".600"/><path d="M.800 4l9.700-3.300 5.200 1.600-2.200 8-6.500 2.500-5.600-4.500z" fill="#f7f8fb" stroke="#9aa2b6" stroke-width=".700"/><path d="M2.200 5.500l1.300 3M3.400 4.300l.700 1.400M14 4l-1.200 3.500M12.500 9l-4.500 2" stroke="#a9bbdc" stroke-width=".800"/><path d="M6 3.800l2.200 4.700 4.500-6.600" fill="none" stroke="#222c16" stroke-width="2.700" stroke-linejoin="round"/><path d="M6.300 4.500l2 3.400 3.800-5.300" fill="none" stroke="#a2dc22" stroke-width="1.200" stroke-linejoin="round"/></svg>
<div class="t" style="left:1288.0px;top:419px;"><span class="sx" style="transform:scaleX(0.9936);transform-origin:0 50%">Zatwierdzony</span></div>
<div class="a" style="left:13.500px;top:435px;width:1379.500px;height:18px;background:#f5f6fa"></div>
<div class="a" style="left:2px;top:435px;width:11.500px;height:18px;background:linear-gradient(#e9ecf2,#dfe3eb);box-shadow:inset 0 -1px 0 #d3d8e2"></div>
<div class="t" style="left:14.8px;top:437px;"><span class="sx" style="transform:scaleX(0.9667);transform-origin:0 50%">PW 00014/PR/2019</span></div>
<div class="t" style="left:242.8px;top:437px;"><span class="sx" style="transform:scaleX(1.0170);transform-origin:0 50%">31.10.2019</span></div>
<div class="t" style="right:812.5px;top:437px;"><span class="sx" style="transform:scaleX(0.9805);transform-origin:100% 50%">480,00</span></div>
<div class="t" style="left:584.3px;top:437px;"><span class="sx" style="transform:scaleX(0.8903);transform-origin:0 50%">!NIEOKREŚLONY</span></div>
<svg class="a" style="left:1268.5px;top:436.2px" width="17" height="16" viewBox="0 0 17 16"><path d="M3.500 11.500l4.500 3.800 6.500-4-.300-1.300-6.500 3.300-4-3z" fill="#c3c9d6" stroke="#8a93a8" stroke-width=".600"/><path d="M2 9.500l5.500 4.500 7.500-4.300-.600-1.700-7 3.500-5-4z" fill="#d5dae4" stroke="#8f98ad" stroke-width=".600"/><path d="M1 7.800l6 4.700 8-4.200-1-2z" fill="#e6e9f0" stroke="#98a1b6" stroke-width=".600"/><path d="M.800 4l9.700-3.300 5.200 1.600-2.200 8-6.500 2.500-5.600-4.500z" fill="#f7f8fb" stroke="#9aa2b6" stroke-width=".700"/><path d="M2.200 5.500l1.300 3M3.400 4.300l.700 1.400M14 4l-1.200 3.500M12.500 9l-4.500 2" stroke="#a9bbdc" stroke-width=".800"/><path d="M6 3.800l2.200 4.700 4.500-6.600" fill="none" stroke="#222c16" stroke-width="2.700" stroke-linejoin="round"/><path d="M6.300 4.500l2 3.400 3.800-5.300" fill="none" stroke="#a2dc22" stroke-width="1.200" stroke-linejoin="round"/></svg>
<div class="t" style="left:1288.0px;top:437px;"><span class="sx" style="transform:scaleX(0.9936);transform-origin:0 50%">Zatwierdzony</span></div>
<div class="a" style="left:13.500px;top:453px;width:1379.500px;height:18px;background:#edf5ee"></div>
<div class="a" style="left:2px;top:453px;width:11.500px;height:18px;background:linear-gradient(#e9ecf2,#dfe3eb);box-shadow:inset 0 -1px 0 #d3d8e2"></div>
<div class="t" style="left:14.8px;top:455px;"><span class="sx" style="transform:scaleX(0.9667);transform-origin:0 50%">PW 00008/PR/2020</span></div>
<div class="t" style="left:242.8px;top:455px;"><span class="sx" style="transform:scaleX(1.0170);transform-origin:0 50%">30.01.2020</span></div>
<div class="t" style="right:812.5px;top:455px;"><span class="sx" style="transform:scaleX(0.9805);transform-origin:100% 50%">471,12</span></div>
<div class="t" style="left:584.3px;top:455px;"><span class="sx" style="transform:scaleX(0.8903);transform-origin:0 50%">!NIEOKREŚLONY</span></div>
<svg class="a" style="left:1268.5px;top:454.2px" width="17" height="16" viewBox="0 0 17 16"><path d="M3.500 11.500l4.500 3.800 6.500-4-.300-1.300-6.500 3.300-4-3z" fill="#c3c9d6" stroke="#8a93a8" stroke-width=".600"/><path d="M2 9.500l5.500 4.500 7.500-4.300-.600-1.700-7 3.500-5-4z" fill="#d5dae4" stroke="#8f98ad" stroke-width=".600"/><path d="M1 7.800l6 4.700 8-4.200-1-2z" fill="#e6e9f0" stroke="#98a1b6" stroke-width=".600"/><path d="M.800 4l9.700-3.300 5.200 1.600-2.200 8-6.500 2.500-5.600-4.500z" fill="#f7f8fb" stroke="#9aa2b6" stroke-width=".700"/><path d="M2.200 5.500l1.300 3M3.400 4.300l.700 1.400M14 4l-1.200 3.500M12.500 9l-4.500 2" stroke="#a9bbdc" stroke-width=".800"/><path d="M6 3.800l2.200 4.700 4.500-6.600" fill="none" stroke="#222c16" stroke-width="2.700" stroke-linejoin="round"/><path d="M6.300 4.500l2 3.400 3.800-5.300" fill="none" stroke="#a2dc22" stroke-width="1.200" stroke-linejoin="round"/></svg>
<div class="t" style="left:1288.0px;top:455px;"><span class="sx" style="transform:scaleX(0.9936);transform-origin:0 50%">Zatwierdzony</span></div>
<div class="a" style="left:13.500px;top:471px;width:1379.500px;height:18px;background:#f5f6fa"></div>
<div class="a" style="left:2px;top:471px;width:11.500px;height:18px;background:linear-gradient(#e9ecf2,#dfe3eb);box-shadow:inset 0 -1px 0 #d3d8e2"></div>
<div class="t" style="left:14.8px;top:473px;"><span class="sx" style="transform:scaleX(0.9618);transform-origin:0 50%">PZ 00007/PR/2019</span></div>
<div class="t" style="left:242.8px;top:473px;"><span class="sx" style="transform:scaleX(1.0170);transform-origin:0 50%">25.10.2019</span></div>
<div class="t" style="right:812.5px;top:473px;"><span class="sx" style="transform:scaleX(0.9805);transform-origin:100% 50%">467,15</span></div>
<div class="t" style="left:584.3px;top:473px;"><span class="sx" style="transform:scaleX(0.9742);transform-origin:0 50%">Dostawca 3</span></div>
<div class="t" style="left:926.3px;top:473px;"><span class="sx" style="transform:scaleX(0.9254);transform-origin:0 50%">Serwis RHO</span></div>
<svg class="a" style="left:1268.5px;top:472.2px" width="17" height="16" viewBox="0 0 17 16"><path d="M3.500 11.500l4.500 3.800 6.500-4-.300-1.300-6.500 3.300-4-3z" fill="#c3c9d6" stroke="#8a93a8" stroke-width=".600"/><path d="M2 9.500l5.500 4.500 7.500-4.300-.600-1.700-7 3.500-5-4z" fill="#d5dae4" stroke="#8f98ad" stroke-width=".600"/><path d="M1 7.800l6 4.700 8-4.200-1-2z" fill="#e6e9f0" stroke="#98a1b6" stroke-width=".600"/><path d="M.800 4l9.700-3.300 5.200 1.600-2.200 8-6.500 2.500-5.600-4.500z" fill="#f7f8fb" stroke="#9aa2b6" stroke-width=".700"/><path d="M2.200 5.500l1.300 3M3.400 4.300l.700 1.400M14 4l-1.200 3.500M12.500 9l-4.500 2" stroke="#a9bbdc" stroke-width=".800"/><path d="M6 3.800l2.200 4.700 4.500-6.600" fill="none" stroke="#222c16" stroke-width="2.700" stroke-linejoin="round"/><path d="M6.300 4.500l2 3.400 3.800-5.300" fill="none" stroke="#a2dc22" stroke-width="1.200" stroke-linejoin="round"/></svg>
<div class="t" style="left:1288.0px;top:473px;"><span class="sx" style="transform:scaleX(0.9936);transform-origin:0 50%">Zatwierdzony</span></div>
<div class="a" style="left:13.500px;top:489px;width:1379.500px;height:18px;background:#edf5ee"></div>
<div class="a" style="left:2px;top:489px;width:11.500px;height:18px;background:linear-gradient(#e9ecf2,#dfe3eb);box-shadow:inset 0 -1px 0 #d3d8e2"></div>
<div class="t" style="left:14.8px;top:491px;"><span class="sx" style="transform:scaleX(0.9667);transform-origin:0 50%">PW 00034/PR/2019</span></div>
<div class="t" style="left:242.8px;top:491px;"><span class="sx" style="transform:scaleX(1.0170);transform-origin:0 50%">13.12.2019</span></div>
<div class="t" style="right:812.5px;top:491px;"><span class="sx" style="transform:scaleX(0.9805);transform-origin:100% 50%">465,84</span></div>
<div class="t" style="left:584.3px;top:491px;"><span class="sx" style="transform:scaleX(0.8903);transform-origin:0 50%">!NIEOKREŚLONY</span></div>
<svg class="a" style="left:1268.5px;top:490.2px" width="17" height="16" viewBox="0 0 17 16"><path d="M3.500 11.500l4.500 3.800 6.500-4-.300-1.300-6.500 3.300-4-3z" fill="#c3c9d6" stroke="#8a93a8" stroke-width=".600"/><path d="M2 9.500l5.500 4.500 7.500-4.300-.600-1.700-7 3.500-5-4z" fill="#d5dae4" stroke="#8f98ad" stroke-width=".600"/><path d="M1 7.800l6 4.700 8-4.200-1-2z" fill="#e6e9f0" stroke="#98a1b6" stroke-width=".600"/><path d="M.800 4l9.700-3.300 5.200 1.600-2.200 8-6.500 2.500-5.600-4.500z" fill="#f7f8fb" stroke="#9aa2b6" stroke-width=".700"/><path d="M2.200 5.500l1.300 3M3.400 4.300l.700 1.400M14 4l-1.200 3.500M12.500 9l-4.500 2" stroke="#a9bbdc" stroke-width=".800"/><path d="M6 3.800l2.200 4.700 4.500-6.600" fill="none" stroke="#222c16" stroke-width="2.700" stroke-linejoin="round"/><path d="M6.300 4.500l2 3.400 3.800-5.300" fill="none" stroke="#a2dc22" stroke-width="1.200" stroke-linejoin="round"/></svg>
<div class="t" style="left:1288.0px;top:491px;"><span class="sx" style="transform:scaleX(0.9936);transform-origin:0 50%">Zatwierdzony</span></div>
<div class="a" style="left:13.500px;top:507px;width:1379.500px;height:18px;background:#f5f6fa"></div>
<div class="a" style="left:2px;top:507px;width:11.500px;height:18px;background:linear-gradient(#e9ecf2,#dfe3eb);box-shadow:inset 0 -1px 0 #d3d8e2"></div>
<div class="t" style="left:14.8px;top:509px;"><span class="sx" style="transform:scaleX(0.9667);transform-origin:0 50%">PW 00009/PR/2020</span></div>
<div class="t" style="left:242.8px;top:509px;"><span class="sx" style="transform:scaleX(1.0170);transform-origin:0 50%">30.01.2020</span></div>
<div class="t" style="right:812.5px;top:509px;"><span class="sx" style="transform:scaleX(0.9805);transform-origin:100% 50%">435,12</span></div>
<div class="t" style="left:584.3px;top:509px;"><span class="sx" style="transform:scaleX(0.8903);transform-origin:0 50%">!NIEOKREŚLONY</span></div>
<svg class="a" style="left:1268.5px;top:508.2px" width="17" height="16" viewBox="0 0 17 16"><path d="M3.500 11.500l4.500 3.800 6.500-4-.300-1.300-6.500 3.300-4-3z" fill="#c3c9d6" stroke="#8a93a8" stroke-width=".600"/><path d="M2 9.500l5.500 4.500 7.500-4.300-.600-1.700-7 3.500-5-4z" fill="#d5dae4" stroke="#8f98ad" stroke-width=".600"/><path d="M1 7.800l6 4.700 8-4.200-1-2z" fill="#e6e9f0" stroke="#98a1b6" stroke-width=".600"/><path d="M.800 4l9.700-3.300 5.200 1.600-2.200 8-6.500 2.500-5.600-4.500z" fill="#f7f8fb" stroke="#9aa2b6" stroke-width=".700"/><path d="M2.200 5.500l1.300 3M3.400 4.300l.700 1.400M14 4l-1.200 3.500M12.500 9l-4.500 2" stroke="#a9bbdc" stroke-width=".800"/><path d="M6 3.800l2.200 4.700 4.500-6.600" fill="none" stroke="#222c16" stroke-width="2.700" stroke-linejoin="round"/><path d="M6.300 4.500l2 3.400 3.800-5.300" fill="none" stroke="#a2dc22" stroke-width="1.200" stroke-linejoin="round"/></svg>
<div class="t" style="left:1288.0px;top:509px;"><span class="sx" style="transform:scaleX(0.9936);transform-origin:0 50%">Zatwierdzony</span></div>
<div class="a" style="left:13.500px;top:525px;width:1379.500px;height:18px;background:#edf5ee"></div>
<div class="a" style="left:2px;top:525px;width:11.500px;height:18px;background:linear-gradient(#e9ecf2,#dfe3eb);box-shadow:inset 0 -1px 0 #d3d8e2"></div>
<div class="t" style="left:14.8px;top:527px;"><span class="sx" style="transform:scaleX(0.9667);transform-origin:0 50%">PW 00010/PR/2020</span></div>
<div class="t" style="left:242.8px;top:527px;"><span class="sx" style="transform:scaleX(1.0170);transform-origin:0 50%">30.01.2020</span></div>
<div class="t" style="right:812.5px;top:527px;"><span class="sx" style="transform:scaleX(0.9805);transform-origin:100% 50%">435,12</span></div>
<div class="t" style="left:584.3px;top:527px;"><span class="sx" style="transform:scaleX(0.8903);transform-origin:0 50%">!NIEOKREŚLONY</span></div>
<svg class="a" style="left:1268.5px;top:526.2px" width="17" height="16" viewBox="0 0 17 16"><path d="M3.500 11.500l4.500 3.800 6.500-4-.300-1.300-6.500 3.300-4-3z" fill="#c3c9d6" stroke="#8a93a8" stroke-width=".600"/><path d="M2 9.500l5.500 4.500 7.500-4.300-.600-1.700-7 3.500-5-4z" fill="#d5dae4" stroke="#8f98ad" stroke-width=".600"/><path d="M1 7.800l6 4.700 8-4.200-1-2z" fill="#e6e9f0" stroke="#98a1b6" stroke-width=".600"/><path d="M.800 4l9.700-3.300 5.200 1.600-2.200 8-6.500 2.500-5.600-4.500z" fill="#f7f8fb" stroke="#9aa2b6" stroke-width=".700"/><path d="M2.200 5.500l1.300 3M3.400 4.300l.700 1.400M14 4l-1.200 3.500M12.500 9l-4.500 2" stroke="#a9bbdc" stroke-width=".800"/><path d="M6 3.800l2.200 4.700 4.500-6.600" fill="none" stroke="#222c16" stroke-width="2.700" stroke-linejoin="round"/><path d="M6.300 4.500l2 3.400 3.800-5.300" fill="none" stroke="#a2dc22" stroke-width="1.200" stroke-linejoin="round"/></svg>
<div class="t" style="left:1288.0px;top:527px;"><span class="sx" style="transform:scaleX(0.9936);transform-origin:0 50%">Zatwierdzony</span></div>
<div class="a" style="left:14px;top:183px;width:1379px;height:18px;box-sizing:border-box;border-top:1px dotted #000;border-bottom:1px dotted #000;border-left:1px dotted #000"></div>
<div class="a" style="left:6px;top:188px;width:0;height:0;border-top:4px solid transparent;border-bottom:4px solid transparent;border-left:5px solid #111"></div>
<div class="a" style="left:2px;top:542px;width:1391px;height:32px;background:linear-gradient(#edeff3 0%,#e1e4ec 50%,#dadee8 51%,#dadee8 100%)"></div>
<div class="a" style="left:2px;top:541px;width:1391px;height:1px;background:#b4bccd"></div>
<div class="a" style="left:16px;top:545px;width:224px;height:26px;box-sizing:border-box;background:#fff;border:1px solid #d5d9e2;border-radius:2px"></div>
<div class="t" style="left:25.8px;top:551px;"><span class="sx" style="transform:scaleX(0.9537);transform-origin:0 50%">163 pozycji</span></div>
<div class="a" style="left:2.500px;top:574px;width:1396px;height:17px;box-sizing:border-box;border:1px solid #959fb6;border-radius:3px;background:linear-gradient(#fbfbfc 0%,#e6e9ef 46%,#ced4e1 50%,#ced4e1 92%,#e8eaf0 93%)"></div>
<div class="t" style="left:755.3px;top:574.5px;letter-spacing:4.027px;font-weight:bold;color:#141a33;">UKRYJ</div>
<div class="t" style="left:820.3px;top:574.5px;letter-spacing:4.783px;font-weight:bold;color:#141a33;">SZCZEGÓŁY</div>
<div class="t" style="left:937.3px;top:574.5px;font-weight:bold;color:#141a33;"><span class="sx" style="transform:scaleX(0.9532);transform-origin:0 50%">[</span></div>
<div class="t" style="left:947.3px;top:574.5px;font-weight:bold;color:#141a33;"><span class="sx" style="transform:scaleX(1.2457);transform-origin:0 50%">F8</span></div>
<div class="t" style="left:969.3px;top:574.5px;font-weight:bold;color:#141a33;"><span class="sx" style="transform:scaleX(0.9532);transform-origin:0 50%">]</span></div>
<div class="a" style="left:858px;top:593px;width:2px;height:2px;background:#7f8cab"></div>
<div class="a" style="left:862px;top:593px;width:2px;height:2px;background:#7f8cab"></div>
<div class="a" style="left:866px;top:593px;width:2px;height:2px;background:#7f8cab"></div>
<div class="a" style="left:870px;top:593px;width:2px;height:2px;background:#7f8cab"></div>
<div class="a" style="left:2px;top:623px;width:1391px;height:1px;background:#8f9fbd"></div>
<div class="a" style="left:2px;top:624px;width:1391px;height:4px;background:#fde6a0"></div>
<div class="a" style="left:5px;top:597px;width:102px;height:27px;box-sizing:border-box;border:1px solid #9ba8c1;border-bottom:none;border-radius:4px 4px 0 0;background:linear-gradient(#fffdf6 0%,#fff4d8 64%,#fde8a8 68%,#fde6a0 100%);box-shadow:inset 1px 1px 0 rgba(255,255,255,.8)"></div>
<div class="a" style="left:106.5px;top:598px;width:67.5px;height:25px;box-sizing:border-box;border:1px solid #929eb7;border-bottom:none;border-radius:4px 4px 0 0;background:linear-gradient(#eef0f5 0%,#e2e6ed 50%,#d1d7e3 100%);box-shadow:inset 1px 1px 0 rgba(255,255,255,.85),inset -1px 0 0 rgba(255,255,255,.5)"></div>
<div class="a" style="left:174px;top:598px;width:148px;height:25px;box-sizing:border-box;border:1px solid #929eb7;border-bottom:none;border-radius:4px 4px 0 0;background:linear-gradient(#eef0f5 0%,#e2e6ed 50%,#d1d7e3 100%);box-shadow:inset 1px 1px 0 rgba(255,255,255,.85),inset -1px 0 0 rgba(255,255,255,.5)"></div>
<div class="a" style="left:322px;top:598px;width:86px;height:25px;box-sizing:border-box;border:1px solid #929eb7;border-bottom:none;border-radius:4px 4px 0 0;background:linear-gradient(#eef0f5 0%,#e2e6ed 50%,#d1d7e3 100%);box-shadow:inset 1px 1px 0 rgba(255,255,255,.85),inset -1px 0 0 rgba(255,255,255,.5)"></div>
<div class="t" style="left:35.8px;top:605px;"><span class="sx" style="transform:scaleX(0.9714);transform-origin:0 50%">Specyfikacja</span></div>
<div class="t" style="left:135.8px;top:605px;"><span class="sx" style="transform:scaleX(0.9739);transform-origin:0 50%">Partie</span></div>
<div class="t" style="left:203.8px;top:605px;"><span class="sx" style="transform:scaleX(0.9704);transform-origin:0 50%">Dokumenty powiązane</span></div>
<div class="t" style="left:351.8px;top:605px;"><span class="sx" style="transform:scaleX(0.9201);transform-origin:0 50%">Załączniki</span></div>
<svg class="a" style="left:15px;top:603px" width="17" height="17" viewBox="0 0 17 17"><rect x="1.500" y="1.500" width="12.300" height="12.300" rx="1" fill="#fbfcff" stroke="#7684ba" stroke-width="1.100"/><rect x="6.500" y="3.500" width="5" height="6" fill="#e9edf8"/><path d="M5.700 3.300v7.500h2.800" stroke="#5a6796" stroke-width="1.100" fill="none"/><path d="M3.600 3.800h2M3.600 5.600h2M3.600 7.400h2M3.600 9.200h2" stroke="#5a6796" stroke-width=".900"/><polygon points="11.50,7.10 12.95,8.99 15.31,9.30 14.40,11.50 15.31,13.70 12.95,14.01 11.50,15.90 10.05,14.01 7.69,13.70 8.60,11.50 7.69,9.30 10.05,8.99" fill="#e9edf6" stroke="#4a5888" stroke-width=".900" stroke-linejoin="round"/><circle cx="11.500" cy="11.500" r="1.300" fill="#dfe4f0" stroke="#4a5888" stroke-width=".900"/></svg>
<svg class="a" style="left:116px;top:605px" width="14" height="10" viewBox="0 0 14 10"><rect x="0" y="0" width="14" height="10" fill="#eceef3"/><path d="M1.500 1v7M6 1v7M9.500 1v7M12.500 1v8" stroke="#333" stroke-width="1.500"/><path d="M3.600 1v5M8 1v5" stroke="#333" stroke-width="2"/></svg>
<svg class="a" style="left:183px;top:603px" width="17" height="16" viewBox="0 0 17 16"><defs><linearGradient id="gfo" x1="0" y1="0" x2="1" y2="1"><stop offset="0" stop-color="#fde6ae"/><stop offset="1" stop-color="#ec9a2c"/></linearGradient></defs><path d="M.400 3h3.400v12h-3.400z" fill="#d98a2a"/><path d="M.400 3.200h3l.600.800v10.800h-3.600z" fill="#f3c468" stroke="#c9781c" stroke-width=".700"/><rect x="3.700" y="1.200" width="8.800" height="8" rx=".600" fill="#fbfcff" stroke="#7f8ac2" stroke-width="1"/><path d="M5.500 4h5.300M5.500 6h5.300" stroke="#7f8ac2" stroke-width="1"/><path d="M3.900 8.600h12.300l-2.200 6.200h-13.200z" fill="url(#gfo)" stroke="#c9781c" stroke-width=".800" stroke-linejoin="round"/></svg>
<svg class="a" style="left:333px;top:603px" width="10" height="17" viewBox="0 0 10 17"><path d="M2.200 5.500v6.500a2.800 2.800 0 0 0 5.600 0v-8.500a2.200 2.200 0 0 0-4.400 0v7.500" fill="#c9ccd3" stroke="#8f949e" stroke-width="1.300"/><rect x="3.800" y="5.500" width="2.400" height="6" rx="1" fill="#a3a8b2"/></svg>
<div class="t" style="left:11.3px;top:635px;font-weight:bold;"><span class="sx" style="transform:scaleX(1.0276);transform-origin:0 50%">Cennik</span></div>
<div class="cb" style="left:60px;top:634px;width:248px;height:19px"><i></i></div>
<div class="t" style="left:61.7px;top:636px;font-weight:bold;white-space:pre;"><span class="sx" style="transform:scaleX(1.0261);transform-origin:0 50%">PODSTAWOWY ( PLN Netto  )</span></div>
<div class="btn" style="left:4.500px;top:679.5px;width:31px;height:27px;border-color:#9caac2"></div>
<div class="btn" style="left:4.500px;top:707.5px;width:31px;height:27px;border-color:#9caac2"></div>
<div class="btn" style="left:4.500px;top:735.5px;width:31px;height:27px;border-color:#9caac2"></div>
<svg style="position:absolute;left:12px;top:685px" width="16" height="16" viewBox="0 0 16 16"><path d="M4.200 1h4.500l3.800 3.800v8.700a1.500 1.500 0 0 1-1.500 1.500h-8a1.500 1.500 0 0 1-1.500-1.500v-9.500z" fill="#fefefe" stroke="#c2c6cf" stroke-width=".900" stroke-linejoin="round"/><path d="M4.200 1v2.500h-2.500z" fill="#e3e5ea" stroke="#c2c6cf" stroke-width=".600"/><path d="M4.600 13.200l1.100-3.600 6.400-6.800 2.500 2.400-6.400 6.800z" fill="#2b84ea" stroke="#1c62c0" stroke-width=".600"/><path d="M12.100 2.800l1.200-1.300 2.500 2.400-1.200 1.300z" fill="#3a3a3a"/><path d="M4.600 13.200l1.100-3.600 2.500 2.400z" fill="#dcdcdc" stroke="#7a7a7a" stroke-width=".500"/><path d="M4.600 13.200l.500-1.500 1 1z" fill="#2a2a2a"/></svg>
<svg style="position:absolute;left:12px;top:713px" width="16" height="16" viewBox="0 0 16 16"><defs><linearGradient id="gd12713" x1="0" y1="0" x2="1" y2="1"><stop offset="0" stop-color="#1f7fc4"/><stop offset="1" stop-color="#6fc0ee"/></linearGradient></defs><path d="M2.2 4.6l2.4-2.4 3.4 3.4 3.4-3.4 2.4 2.4-3.4 3.4 3.4 3.4-2.4 2.4-3.4-3.4-3.4 3.4-2.4-2.4 3.4-3.4z" fill="url(#gd12713)" stroke="#4aa3dc" stroke-width=".6" stroke-linejoin="round"/></svg>
<svg class="a" style="left:9px;top:741px" width="23" height="17" viewBox="0 0 23 17"><path d="M1.500 1h20v13l-2.500 2.500h-17.500z" fill="#fff" stroke="#111" stroke-width="1.400"/><path d="M4 3v9M6.500 3v9M9 3v9M11.500 3v9M14 3v9M16.500 3v9M19 3v9" stroke="#111" stroke-width="1.200"/><path d="M3 14h15" stroke="#111" stroke-width="1.500" stroke-dasharray="1.500 1"/></svg>
<div class="a" style="left:36px;top:679px;width:1357px;height:124px;background:#fff"></div>
<div class="hd" style="left:36px;top:679px;width:1205.500px;height:19px"></div>
<div class="t" style="left:38px;top:682px;font-size:10px;color:#222">❋</div>
<div class="t" style="left:49.3px;top:682px;color:#465170;"><span class="sx" style="transform:scaleX(0.8167);transform-origin:0 50%">LP</span></div>
<div class="a" style="left:47.0px;top:680px;width:1px;height:17px;background:linear-gradient(#f6f7fa,#d3d8e3)"></div>
<div class="t" style="left:84.8px;top:682px;color:#465170;"><span class="sx" style="transform:scaleX(1.0065);transform-origin:0 50%">Asortyment</span></div>
<div class="a" style="left:82.5px;top:680px;width:1px;height:17px;background:linear-gradient(#f6f7fa,#d3d8e3)"></div>
<div class="t" style="left:184.8px;top:682px;color:#465170;"><span class="sx" style="transform:scaleX(0.9517);transform-origin:0 50%">Nazwa</span></div>
<div class="a" style="left:182.5px;top:680px;width:1px;height:17px;background:linear-gradient(#f6f7fa,#d3d8e3)"></div>
<div class="t" style="left:334.8px;top:682px;color:#465170;"><span class="sx" style="transform:scaleX(0.9282);transform-origin:0 50%">Opis</span></div>
<div class="a" style="left:332.5px;top:680px;width:1px;height:17px;background:linear-gradient(#f6f7fa,#d3d8e3)"></div>
<div class="t" style="left:534.8px;top:682px;color:#465170;"><span class="sx" style="transform:scaleX(0.8860);transform-origin:0 50%">Jm</span></div>
<div class="a" style="left:532.5px;top:680px;width:1px;height:17px;background:linear-gradient(#f6f7fa,#d3d8e3)"></div>
<div class="t" style="left:795.3px;top:682px;color:#465170;"><span class="sx" style="transform:scaleX(1.0040);transform-origin:0 50%">Wartośc VAT</span></div>
<div class="a" style="left:792.5px;top:680px;width:1px;height:17px;background:linear-gradient(#f6f7fa,#d3d8e3)"></div>
<div class="t" style="left:865.3px;top:682px;color:#465170;"><span class="sx" style="transform:scaleX(1.0264);transform-origin:0 50%">Wartość brutto</span></div>
<div class="a" style="left:863.0px;top:680px;width:1px;height:17px;background:linear-gradient(#f6f7fa,#d3d8e3)"></div>
<div class="t" style="left:944.8px;top:682px;color:#465170;"><span class="sx" style="transform:scaleX(1.0116);transform-origin:0 50%">Cena sprz...</span></div>
<div class="a" style="left:942.5px;top:680px;width:1px;height:17px;background:linear-gradient(#f6f7fa,#d3d8e3)"></div>
<div class="t" style="left:1015.3px;top:682px;color:#465170;"><span class="sx" style="transform:scaleX(0.9849);transform-origin:0 50%">MPP - po...</span></div>
<div class="a" style="left:1013.0px;top:680px;width:1px;height:17px;background:linear-gradient(#f6f7fa,#d3d8e3)"></div>
<div class="t" style="left:1078.8px;top:682px;color:#465170;"><span class="sx" style="transform:scaleX(0.8388);transform-origin:0 50%">MPK</span></div>
<div class="a" style="left:1076.5px;top:680px;width:1px;height:17px;background:linear-gradient(#f6f7fa,#d3d8e3)"></div>
<div class="t" style="left:1178.8px;top:682px;color:#465170;"><span class="sx" style="transform:scaleX(1.0150);transform-origin:0 50%">Typ</span></div>
<div class="a" style="left:1176.5px;top:680px;width:1px;height:17px;background:linear-gradient(#f6f7fa,#d3d8e3)"></div>
<div class="a" style="left:68px;top:685px;width:0;height:0;border-left:4.500px solid transparent;border-right:4.500px solid transparent;border-bottom:5px solid #9ea6b6"></div>
<div class="a" style="left:36px;top:698px;width:1205.500px;height:20px;background:#edf5ee"></div>
<div class="a" style="left:36px;top:698px;width:11.500px;height:20px;background:#e4e8ef"></div>
<svg class="a" style="left:38px;top:703px" width="8" height="11" viewBox="0 0 8 11"><circle cx="4" cy="3" r="2" fill="#fff" stroke="#1a1a1a" stroke-width="1.700"/><path d="M4 5v4.500" stroke="#1a1a1a" stroke-width="1.700"/></svg>
<div class="a" style="left:36px;top:717px;width:1205.500px;height:2px;background:#a9b3c9"></div>
<div class="a" style="left:47.500px;top:719px;width:1194px;height:19px;background:#fff6e1"></div>
<div class="a" style="left:36px;top:719px;width:11.500px;height:19px;background:linear-gradient(#e9ecf2,#dfe3eb);box-shadow:inset 0 -1px 0 #d3d8e2"></div>
<div class="t" style="right:1311px;top:722px;"><span class="sx" style="transform:scaleX(0.9796);transform-origin:100% 50%">1</span></div>
<div class="t" style="left:84.8px;top:722px;"><span class="sx" style="transform:scaleX(0.9429);transform-origin:0 50%">Nić czarna</span></div>
<div class="t" style="left:184.8px;top:722px;"><span class="sx" style="transform:scaleX(0.9429);transform-origin:0 50%">Nić czarna</span></div>
<div class="t" style="left:534.8px;top:722px;"><span class="sx" style="transform:scaleX(0.8485);transform-origin:0 50%">MB</span></div>
<div class="t" style="right:602px;top:722px;"><span class="sx" style="transform:scaleX(0.9807);transform-origin:100% 50%">2 940,30</span></div>
<div class="t" style="right:531px;top:722px;"><span class="sx" style="transform:scaleX(0.9805);transform-origin:100% 50%">676,27</span></div>
<div class="t" style="right:451.5px;top:722px;"><span class="sx" style="transform:scaleX(0.9807);transform-origin:100% 50%">3 616,57</span></div>
<div class="t" style="right:382px;top:722px;"><span class="sx" style="transform:scaleX(0.9803);transform-origin:100% 50%">0,00</span></div>
<div class="a" style="left:1038px;top:721px;width:15px;height:15px;box-sizing:border-box;border:1px solid #c5cbd8;background:linear-gradient(#d5dae4,#e4e7ee)"></div>
<svg class="a" style="left:1181.4px;top:720.2px" width="17" height="17" viewBox="0 0 17 17"><path d="M.900 2.600c0 1.200 1.800 3 4.300 5.600v5.300h2.800v-5.300c2.500-2.600 4.300-4.400 4.300-5.600z" fill="#e4e7ec" stroke="#7f8792" stroke-width=".900" stroke-linejoin="round"/><ellipse cx="6.600" cy="2.500" rx="5.700" ry="1.900" fill="#f4f5f7" stroke="#7f8792" stroke-width=".900"/><ellipse cx="6.600" cy="2.700" rx="3.600" ry=".900" fill="#6b727d"/><path d="M5.700 8.500v4.500" stroke="#fff" stroke-width=".800"/><rect x="8.200" y="10.300" width="2.600" height="4.600" rx=".500" fill="#f0a040" stroke="#c87a28" stroke-width=".600"/><rect x="12.100" y="7.300" width="2.700" height="7.600" rx=".500" fill="#ea5a3a" stroke="#c8402a" stroke-width=".600"/><path d="M9.500 11.300v2.600M13.450 8.300v5.600" stroke="#fbe0c8" stroke-width=".700"/></svg>
<div class="t" style="left:1200.8px;top:722px;"><span class="sx" style="transform:scaleX(0.9284);transform-origin:0 50%">Składnik</span></div>
<div class="a" style="left:47.500px;top:738px;width:1194px;height:19px;background:#edf5ee"></div>
<div class="a" style="left:36px;top:738px;width:11.500px;height:19px;background:linear-gradient(#e9ecf2,#dfe3eb);box-shadow:inset 0 -1px 0 #d3d8e2"></div>
<div class="t" style="right:1311px;top:741px;"><span class="sx" style="transform:scaleX(0.9796);transform-origin:100% 50%">2</span></div>
<div class="t" style="left:84.8px;top:741px;"><span class="sx" style="transform:scaleX(0.9435);transform-origin:0 50%">nić niebieska</span></div>
<div class="t" style="left:184.8px;top:741px;"><span class="sx" style="transform:scaleX(0.9435);transform-origin:0 50%">nić niebieska</span></div>
<div class="t" style="left:534.8px;top:741px;"><span class="sx" style="transform:scaleX(0.8485);transform-origin:0 50%">MB</span></div>
<div class="t" style="right:602px;top:741px;"><span class="sx" style="transform:scaleX(0.9808);transform-origin:100% 50%">66 548,90</span></div>
<div class="t" style="right:531px;top:741px;"><span class="sx" style="transform:scaleX(0.9808);transform-origin:100% 50%">15 306,25</span></div>
<div class="t" style="right:451.5px;top:741px;"><span class="sx" style="transform:scaleX(0.9808);transform-origin:100% 50%">81 855,15</span></div>
<div class="t" style="right:382px;top:741px;"><span class="sx" style="transform:scaleX(0.9803);transform-origin:100% 50%">0,00</span></div>
<div class="a" style="left:1038px;top:740px;width:15px;height:15px;box-sizing:border-box;border:1px solid #c5cbd8;background:linear-gradient(#d5dae4,#e4e7ee)"></div>
<svg class="a" style="left:1181.4px;top:739.2px" width="17" height="17" viewBox="0 0 17 17"><path d="M.900 2.600c0 1.200 1.800 3 4.300 5.600v5.300h2.800v-5.300c2.500-2.600 4.300-4.400 4.300-5.600z" fill="#e4e7ec" stroke="#7f8792" stroke-width=".900" stroke-linejoin="round"/><ellipse cx="6.600" cy="2.500" rx="5.700" ry="1.900" fill="#f4f5f7" stroke="#7f8792" stroke-width=".900"/><ellipse cx="6.600" cy="2.700" rx="3.600" ry=".900" fill="#6b727d"/><path d="M5.700 8.500v4.500" stroke="#fff" stroke-width=".800"/><rect x="8.200" y="10.300" width="2.600" height="4.600" rx=".500" fill="#f0a040" stroke="#c87a28" stroke-width=".600"/><rect x="12.100" y="7.300" width="2.700" height="7.600" rx=".500" fill="#ea5a3a" stroke="#c8402a" stroke-width=".600"/><path d="M9.500 11.300v2.600M13.450 8.300v5.600" stroke="#fbe0c8" stroke-width=".700"/></svg>
<div class="t" style="left:1200.8px;top:741px;"><span class="sx" style="transform:scaleX(0.9284);transform-origin:0 50%">Składnik</span></div>
<div class="a" style="left:47.500px;top:757px;width:1194px;height:19px;background:#f5f6fa"></div>
<div class="a" style="left:36px;top:757px;width:11.500px;height:19px;background:linear-gradient(#e9ecf2,#dfe3eb);box-shadow:inset 0 -1px 0 #d3d8e2"></div>
<div class="t" style="right:1311px;top:760px;"><span class="sx" style="transform:scaleX(0.9796);transform-origin:100% 50%">3</span></div>
<div class="t" style="left:84.8px;top:760px;"><span class="sx" style="transform:scaleX(0.9632);transform-origin:0 50%">Tkanina czerwnoa</span></div>
<div class="t" style="left:184.8px;top:760px;"><span class="sx" style="transform:scaleX(0.9632);transform-origin:0 50%">Tkanina czerwnoa</span></div>
<div class="t" style="left:534.8px;top:760px;"><span class="sx" style="transform:scaleX(0.8485);transform-origin:0 50%">MB</span></div>
<div class="t" style="right:602px;top:760px;"><span class="sx" style="transform:scaleX(0.9808);transform-origin:100% 50%">17 449,00</span></div>
<div class="t" style="right:531px;top:760px;"><span class="sx" style="transform:scaleX(0.9807);transform-origin:100% 50%">4 013,27</span></div>
<div class="t" style="right:451.5px;top:760px;"><span class="sx" style="transform:scaleX(0.9808);transform-origin:100% 50%">21 462,27</span></div>
<div class="t" style="right:382px;top:760px;"><span class="sx" style="transform:scaleX(0.9807);transform-origin:100% 50%">20,00</span></div>
<div class="a" style="left:1038px;top:759px;width:15px;height:15px;box-sizing:border-box;border:1px solid #c5cbd8;background:linear-gradient(#d5dae4,#e4e7ee)"></div>
<svg class="a" style="left:1181.4px;top:758.2px" width="17" height="17" viewBox="0 0 17 17"><path d="M.900 2.600c0 1.200 1.800 3 4.300 5.600v5.300h2.800v-5.300c2.500-2.600 4.300-4.400 4.300-5.600z" fill="#e4e7ec" stroke="#7f8792" stroke-width=".900" stroke-linejoin="round"/><ellipse cx="6.600" cy="2.500" rx="5.700" ry="1.900" fill="#f4f5f7" stroke="#7f8792" stroke-width=".900"/><ellipse cx="6.600" cy="2.700" rx="3.600" ry=".900" fill="#6b727d"/><path d="M5.700 8.500v4.500" stroke="#fff" stroke-width=".800"/><rect x="8.200" y="10.300" width="2.600" height="4.600" rx=".500" fill="#f0a040" stroke="#c87a28" stroke-width=".600"/><rect x="12.100" y="7.300" width="2.700" height="7.600" rx=".500" fill="#ea5a3a" stroke="#c8402a" stroke-width=".600"/><path d="M9.500 11.300v2.600M13.450 8.300v5.600" stroke="#fbe0c8" stroke-width=".700"/></svg>
<div class="t" style="left:1200.8px;top:760px;"><span class="sx" style="transform:scaleX(0.9284);transform-origin:0 50%">Składnik</span></div>
<div class="a" style="left:40px;top:724px;width:0;height:0;border-top:4px solid transparent;border-bottom:4px solid transparent;border-left:5px solid #111"></div>
<div class="a" style="left:567.500px;top:557.500px;width:221px;height:239.500px;box-sizing:border-box;border:2px solid #fe0000;border-radius:6px;background:#f1f1f1;box-shadow:3px 3px 4px rgba(0,0,0,.55),inset 2px 2px 3px rgba(0,0,0,.13)">
<div class="mi" style="top:2px">
</div>
<div class="mi" style="top:24px">
</div>
<div class="mi" style="top:46px">
</div>
<div class="mi" style="top:68px">
</div>
<div class="mi" style="top:90px">
</div>
<div class="mi" style="top:118px">
</div>
<div class="mi" style="top:140px">
</div>
<div class="mi" style="top:162px">
<span class="a" style="left:204.500px;top:6px;width:0;height:0;border-top:4px solid transparent;border-bottom:4px solid transparent;border-left:4.500px solid #0a0a0a"></span>
</div>
<div class="mi" style="top:190px">
</div>
<div class="mi" style="top:212px">
</div>
<div class="a" style="left:29px;top:114px;width:187px;height:1px;background:#d7d7d7"></div><div class="a" style="left:29px;top:115px;width:187px;height:1px;background:#fff"></div>
<div class="a" style="left:29px;top:186px;width:187px;height:1px;background:#d7d7d7"></div><div class="a" style="left:29px;top:187px;width:187px;height:1px;background:#fff"></div>
</div>
<div class="t" style="left:601.6px;top:566px;font-size:12px;color:#080808;"><span class="sx" style="transform:scaleX(0.9854);transform-origin:0 50%">Dodaj rekord</span></div>
<div class="t" style="right:629px;top:566px;font-size:12px;color:#080808;"><span class="sx" style="transform:scaleX(0.9179);transform-origin:100% 50%">Ins</span></div>
<div class="t" style="left:601.6px;top:588px;font-size:12px;color:#080808;"><span class="sx" style="transform:scaleX(0.9802);transform-origin:0 50%">Edytuj rekord</span></div>
<div class="t" style="left:601.6px;top:610px;font-size:12px;color:#080808;"><span class="sx" style="transform:scaleX(0.9941);transform-origin:0 50%">Klonuj rekord</span></div>
<div class="t" style="right:629px;top:610px;font-size:12px;color:#080808;"><span class="sx" style="transform:scaleX(1.0027);transform-origin:100% 50%">Ctrl+Ins</span></div>
<div class="t" style="left:601.6px;top:632px;font-size:12px;color:#080808;"><span class="sx" style="transform:scaleX(0.9744);transform-origin:0 50%">Usuń rekord</span></div>
<div class="t" style="right:629px;top:632px;font-size:12px;color:#080808;"><span class="sx" style="transform:scaleX(1.0072);transform-origin:100% 50%">Ctrl+Del</span></div>
<div class="t" style="left:601.6px;top:654px;font-size:12px;color:#080808;"><span class="sx" style="transform:scaleX(0.9976);transform-origin:0 50%">Historia rekordu</span></div>
<div class="t" style="right:629px;top:654px;font-size:12px;color:#080808;"><span class="sx" style="transform:scaleX(1.0482);transform-origin:100% 50%">Ctrl+H</span></div>
<div class="t" style="left:601.6px;top:682px;font-size:12px;color:#080808;"><span class="sx" style="transform:scaleX(0.9577);transform-origin:0 50%">Odśwież bieżący rekord</span></div>
<div class="t" style="right:629px;top:682px;font-size:12px;color:#080808;"><span class="sx" style="transform:scaleX(0.8562);transform-origin:100% 50%">F5</span></div>
<div class="t" style="left:601.6px;top:704px;font-size:12px;color:#080808;"><span class="sx" style="transform:scaleX(0.9871);transform-origin:0 50%">Odśwież widok</span></div>
<div class="t" style="right:629px;top:704px;font-size:12px;color:#080808;"><span class="sx" style="transform:scaleX(0.9877);transform-origin:100% 50%">Ctrl+F5</span></div>
<div class="t" style="left:601.6px;top:726px;font-size:12px;color:#080808;"><span class="sx" style="transform:scaleX(1.0197);transform-origin:0 50%">Widok</span></div>
<div class="t" style="left:601.6px;top:754px;font-size:12px;color:#080808;"><span class="sx" style="transform:scaleX(0.9992);transform-origin:0 50%">Podsumowanie</span></div>
<div class="t" style="left:601.6px;top:776px;font-size:12px;color:#080808;"><span class="sx" style="transform:scaleX(0.9854);transform-origin:0 50%">Zmień status</span></div>
<svg style="position:absolute;left:574px;top:565px" width="16" height="16" viewBox="0 0 16 16"><defs><linearGradient id="gp574565" x1="0" y1="0" x2="0" y2="1"><stop offset="0" stop-color="#8db4f5"/><stop offset="1" stop-color="#2f6fe0"/></linearGradient></defs><path d="M5.5 0.8h5v4.7h4.7v5h-4.7v4.7h-5v-4.7h-4.7v-5h4.7z" fill="url(#gp574565)" stroke="#2a5fc8" stroke-width="1" stroke-linejoin="round"/><path d="M6.5 2h3v4.6h4.5" fill="none" stroke="#b9d2fb" stroke-width="1" opacity=".8"/></svg>
<svg style="position:absolute;left:574px;top:587px" width="16" height="16" viewBox="0 0 16 16"><path d="M4.200 1h4.500l3.800 3.800v8.700a1.500 1.500 0 0 1-1.500 1.500h-8a1.500 1.500 0 0 1-1.500-1.500v-9.500z" fill="#fefefe" stroke="#c2c6cf" stroke-width=".900" stroke-linejoin="round"/><path d="M4.200 1v2.500h-2.500z" fill="#e3e5ea" stroke="#c2c6cf" stroke-width=".600"/><path d="M4.600 13.200l1.100-3.600 6.400-6.800 2.500 2.400-6.400 6.800z" fill="#2b84ea" stroke="#1c62c0" stroke-width=".600"/><path d="M12.100 2.800l1.200-1.300 2.500 2.400-1.200 1.300z" fill="#3a3a3a"/><path d="M4.600 13.200l1.100-3.600 2.500 2.400z" fill="#dcdcdc" stroke="#7a7a7a" stroke-width=".500"/><path d="M4.600 13.200l.500-1.500 1 1z" fill="#2a2a2a"/></svg>
<svg class="a" style="left:574px;top:608.500px" width="16" height="16" viewBox="0 0 16 16"><path d="M1.500 3.500l2-2h5.500v9h-7.500z" fill="#fff" stroke="#50608f" stroke-width="1"/><path d="M3 4.500h4M3 6.500h2" stroke="#8b98bd" stroke-width=".900"/><path d="M6.500 7l2-2h6v10h-8z" fill="#fff" stroke="#50608f" stroke-width="1"/><path d="M8.500 8.500h4.500M8.500 10.500h4.500M8.500 12.500h4.500" stroke="#6f7ea8" stroke-width=".900"/></svg>
<svg style="position:absolute;left:574px;top:631px" width="16" height="16" viewBox="0 0 16 16"><defs><linearGradient id="gd574631" x1="0" y1="0" x2="1" y2="1"><stop offset="0" stop-color="#1f7fc4"/><stop offset="1" stop-color="#6fc0ee"/></linearGradient></defs><path d="M2.2 4.6l2.4-2.4 3.4 3.4 3.4-3.4 2.4 2.4-3.4 3.4 3.4 3.4-2.4 2.4-3.4-3.4-3.4 3.4-2.4-2.4 3.4-3.4z" fill="url(#gd574631)" stroke="#4aa3dc" stroke-width=".6" stroke-linejoin="round"/></svg>
<svg class="a" style="left:573px;top:652px" width="18" height="17" viewBox="0 0 18 17"><circle cx="9.500" cy="9" r="6.500" fill="#dcebfb" stroke="#3f86d8" stroke-width="1.800"/><circle cx="9.500" cy="9" r="4" fill="#fff" stroke="#7fb2ea" stroke-width=".800"/><path d="M9.500 9l3-1.500M9.500 9l-2.500-.5" stroke="#c03a2a" stroke-width="1"/><path d="M1 4l4.500-.5-1 4z" fill="#3f86d8"/></svg>
<svg class="a" style="left:573px;top:680px" width="18" height="17" viewBox="0 0 18 17"><circle cx="9" cy="8.500" r="5" fill="#f4f8fd" stroke="#2f6fc4" stroke-width="3.400"/><circle cx="9" cy="8.500" r="5" fill="none" stroke="#7db4ef" stroke-width="1.800"/><path d="M.800 6.500l4.800.300-2.800 3.600z" fill="#5a9ae4" stroke="#2f6fc4" stroke-width=".700" stroke-linejoin="round"/><path d="M17.200 10.500l-4.800-.300 2.800-3.600z" fill="#5a9ae4" stroke="#2f6fc4" stroke-width=".700" stroke-linejoin="round"/><path d="M5.300 3.300l1.600 1.600M12.700 13.700l-1.600-1.600" stroke="#f1f1f1" stroke-width="1.600"/></svg>
<svg class="a" style="left:573px;top:702.500px" width="17" height="17" viewBox="0 0 17 17"><path d="M1.300 7.800c.2-3.600 3-5.200 6.200-5l3 .2v-2.200l5 3.900-5 3.700v-2.300l-3-.2c-1.800-.1-3.200.5-3.800 2.400z" fill="#d3e2f6" stroke="#4f7fc4" stroke-width=".900" stroke-linejoin="round"/><path d="M15.700 9.200c-.2 3.600-3 5.200-6.200 5l-3-.2v2.200l-5-3.900 5-3.700v2.300l3 .2c1.800.1 3.200-.5 3.800-2.400z" fill="#d3e2f6" stroke="#4f7fc4" stroke-width=".900" stroke-linejoin="round"/></svg>
<svg class="a" style="left:575px;top:754px" width="13" height="14" viewBox="0 0 15 16"><path d="M1.500 1.500h11v3h-1.500v-1.200h-6l4.200 4.500-4.200 4.700h6v-1.200h1.500v3h-11v-1.500l5-5-5-4.800z" fill="#f7b85a" stroke="#c9781c" stroke-width=".900" stroke-linejoin="round"/></svg>
<svg style="position:absolute;left:574px;top:775px" width="16" height="16" viewBox="0 0 16 16"><path d="M2.2 7.2c.4-3 3-4.4 6-4.2l2.2.2v-2.4l4.4 3.8-4.4 3.6v-2.4l-2.4-.2c-2-.1-3.6.4-4.4 2z" fill="#7cc33a" stroke="#4d9a1c" stroke-width=".7" stroke-linejoin="round"/><path d="M13.8 8.8c-.4 3-3 4.4-6 4.2l-2.2-.2v2.4l-4.4-3.8 4.4-3.6v2.4l2.4.2c2 .1 3.600-.4 4.400-2z" fill="#7db3ea" stroke="#3d7dc8" stroke-width=".7" stroke-linejoin="round"/></svg>
<svg class="a" style="left:0;top:0;pointer-events:none" width="1393" height="803" viewBox="0 0 1393 803">
<defs><filter id="sh" x="-20%" y="-20%" width="150%" height="150%"><feGaussianBlur in="SourceAlpha" stdDeviation="2.200"/><feOffset dx="2.500" dy="3" result="o"/><feComponentTransfer><feFuncA type="linear" slope=".45"/></feComponentTransfer><feMerge><feMergeNode/><feMergeNode in="SourceGraphic"/></feMerge></filter>
<radialGradient id="rc" cx=".5" cy=".4" r=".6"><stop offset="0" stop-color="#e8383c"/><stop offset="1" stop-color="#d8262c"/></radialGradient></defs>
<g filter="url(#sh)">
<polygon points="467,437 469,436.500 517.500,534.500 520.400,528.300 520.400,557.200 499.200,537.600 506.500,539.500" fill="#ff0000"/>
<polygon points="756.500,450.500 758.500,451 729.300,540.300 736.800,539 716.600,557.400 715.700,531.300 720.500,536.700" fill="#ff0000"/>
<polygon points="443.300,698 444,696 560.500,747.400 561.300,740.700 579.800,760 550.400,761.700 556.300,758.300" fill="#ff0000"/>
<circle cx="462" cy="422.700" r="13.700" fill="url(#rc)" stroke="#ef2a30" stroke-width="1.400"/>
<circle cx="763" cy="436.100" r="13.700" fill="url(#rc)" stroke="#ef2a30" stroke-width="1.400"/>
<circle cx="432.700" cy="686.900" r="13.700" fill="url(#rc)" stroke="#ef2a30" stroke-width="1.400"/>
</g>
<g fill="#fff" font-family="Liberation Sans, sans-serif" font-size="15" text-anchor="middle">
<text x="461.500" y="428">1</text><text x="762.500" y="441.500">2</text><text x="432.500" y="692.300">3</text></g>
</svg>
</body></html>
